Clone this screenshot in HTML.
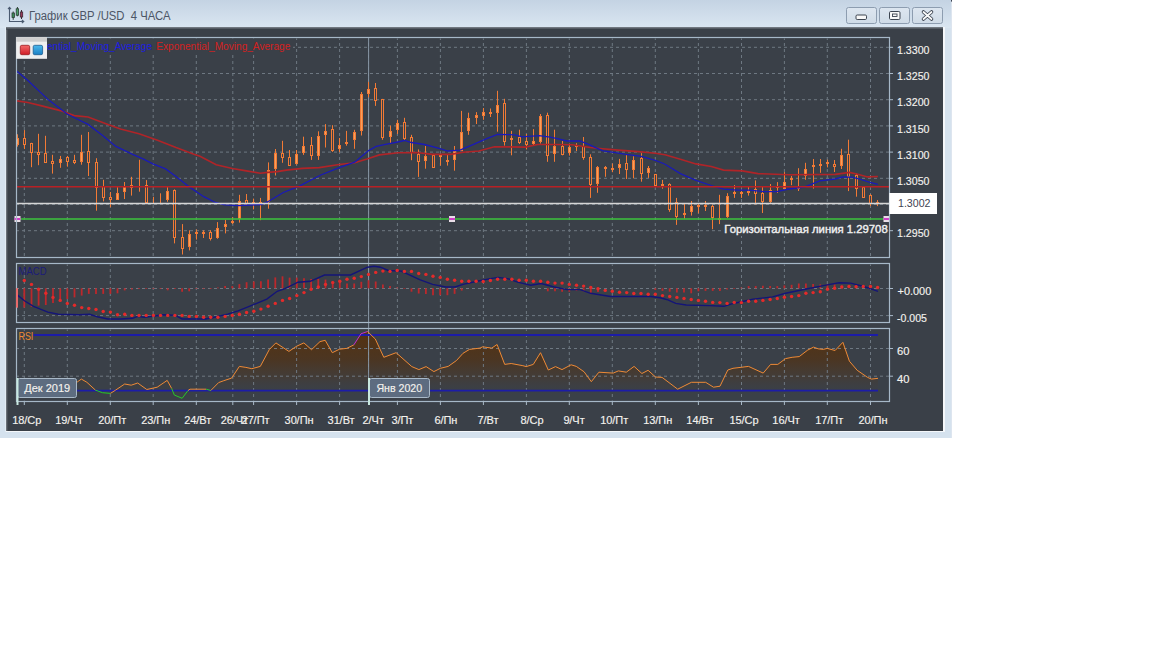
<!DOCTYPE html>
<html><head><meta charset="utf-8"><style>
html,body{margin:0;padding:0;background:#ffffff;width:1152px;height:648px;overflow:hidden}
svg{position:absolute;left:0;top:0;display:block}
</style></head><body>
<svg width="1152" height="648" viewBox="0 0 1152 648">
<defs><linearGradient id="tb" x1="0" y1="0" x2="0" y2="1"><stop offset="0" stop-color="#c4d3e3"/><stop offset="1" stop-color="#dae6f1"/></linearGradient><linearGradient id="btn" x1="0" y1="0" x2="0" y2="1"><stop offset="0" stop-color="#dde6f0"/><stop offset="1" stop-color="#cfdbe7"/></linearGradient><linearGradient id="shl" x1="0" y1="0" x2="1" y2="0"><stop offset="0" stop-color="#7a8088"/><stop offset="1" stop-color="#3a4048"/></linearGradient><linearGradient id="sh" x1="0" y1="0" x2="0" y2="1"><stop offset="0" stop-color="#7f868e"/><stop offset="1" stop-color="#3a4048"/></linearGradient><linearGradient id="rsif" x1="0" y1="330" x2="0" y2="396" gradientUnits="userSpaceOnUse"><stop offset="0" stop-color="#56320f" stop-opacity="1"/><stop offset="0.45" stop-color="#4c3520" stop-opacity="0.95"/><stop offset="0.72" stop-color="#483a2e" stop-opacity="0.6"/><stop offset="1" stop-color="#3c4048" stop-opacity="0"/></linearGradient><linearGradient id="gr" x1="0" y1="0" x2="0" y2="1"><stop offset="0" stop-color="#f46a6a"/><stop offset="1" stop-color="#d01c24"/></linearGradient><linearGradient id="gb" x1="0" y1="0" x2="0" y2="1"><stop offset="0" stop-color="#4cb8ec"/><stop offset="1" stop-color="#1a80c4"/></linearGradient><clipPath id="cmain"><rect x="17" y="38" width="872" height="219"/></clipPath><clipPath id="crsi"><rect x="17" y="329" width="872" height="72"/></clipPath></defs>
<rect x="0" y="0" width="952" height="438" fill="#d5e2ee"/>
<rect x="0" y="0" width="952" height="28" fill="url(#tb)"/>
<rect x="951" y="0" width="1" height="438" fill="#dde5ef"/><rect x="951" y="0" width="1" height="1.6" fill="#3a4250"/>
<rect x="6" y="27" width="939" height="405" fill="#f4f7fa"/><rect x="5" y="27" width="1" height="405" fill="#e2ecf4"/>
<rect x="6" y="27" width="937" height="404" fill="#3a4048"/><rect x="6" y="27" width="2" height="404" fill="url(#shl)"/>
<rect x="6" y="27" width="937" height="2.5" fill="url(#sh)"/>
<g fill="none" stroke="#4a5a70" stroke-width="1.1"><path d="M9.5 7.5 V21.5 H23.5"/><path d="M8 9.2 L9.5 7.3 L11 9.2"/><path d="M21.8 19.8 L23.8 21.5 L21.8 23.2"/></g>
<g stroke="#2c3c34" stroke-width="1"><path d="M13.2 11.5 V19.8"/><path d="M17.4 7 V16.3"/><path d="M21.5 10 V19" stroke="#3c2c34"/></g>
<rect x="12" y="13" width="2.4" height="4.5" fill="#3c8a58" stroke="#2c3c34" stroke-width="0.8"/>
<rect x="16.2" y="8.8" width="2.4" height="6.4" fill="#4aa068" stroke="#2c3c34" stroke-width="0.8"/>
<rect x="20.3" y="12" width="2.4" height="5" fill="#9a3a5a" stroke="#3c2c34" stroke-width="0.8"/>
<text x="29" y="20" font-family='"Liberation Sans", sans-serif' font-size="12.3" fill="#4c5666" textLength="141.5" lengthAdjust="spacingAndGlyphs" xml:space="preserve">График GBP /USD  4 ЧАСА</text>
<rect x="846.5" y="7.5" width="30" height="16" rx="2" fill="url(#btn)" stroke="#8d9db0" stroke-width="1"/>
<rect x="879.5" y="7.5" width="30" height="16" rx="2" fill="url(#btn)" stroke="#8d9db0" stroke-width="1"/>
<rect x="912.5" y="7.5" width="30" height="16" rx="2" fill="url(#btn)" stroke="#8d9db0" stroke-width="1"/>
<rect x="856" y="15" width="10.5" height="4.5" rx="1.2" fill="#f8f8f8" stroke="#3c4450" stroke-width="1"/>
<rect x="889.5" y="11.5" width="10.5" height="8" rx="1.2" fill="#f8f8f8" stroke="#3c4450" stroke-width="1"/><rect x="892.5" y="14" width="4.5" height="2.5" fill="#f8f8f8" stroke="#3c4450" stroke-width="0.9"/>
<path d="M923.5 12 L931.5 19 M931.5 12 L923.5 19" stroke="#3c4450" stroke-width="3.6" stroke-linecap="round"/><path d="M923.5 12 L931.5 19 M931.5 12 L923.5 19" stroke="#fafafa" stroke-width="1.8" stroke-linecap="round"/>
<g clip-path="url(#crsi)"><polygon points="17.0,386.0 77.2,382.0 81.4,379.1 86.9,382.3 95.4,390.1 102.5,392.7 110.4,393.4 115.6,390.1 124.7,384.0 131.2,385.2 137.7,383.0 146.8,389.5 157.2,387.2 167.2,380.4 171.7,388.5 174.3,395.0 182.1,398.3 188.0,390.5 190.0,389.2 206.2,389.2 210.8,390.5 218.6,382.6 223.8,380.7 231.6,378.1 239.4,366.4 245.9,367.4 251.8,368.7 260.3,366.4 269.4,349.4 275.9,342.9 288.9,351.4 296.7,346.2 303.9,342.9 311.5,349.7 320.0,341.6 325.2,340.3 332.3,352.7 339.5,349.2 346.7,348.4 353.8,344.9 361.0,333.8 367.5,331.5 375.3,339.0 383.8,357.3 396.1,352.7 411.8,366.6 418.9,369.6 426.1,366.6 433.9,371.6 440.4,368.3 448.2,366.4 456.5,360.5 463.0,353.3 469.5,349.4 480.0,348.1 482.6,346.8 491.7,348.1 497.1,344.5 504.7,364.4 511.2,363.5 522.9,365.7 526.2,366.6 533.3,364.4 540.5,352.7 548.3,370.0 555.5,366.6 562.0,369.6 571.1,364.8 576.3,366.4 584.1,371.8 591.3,381.7 598.9,372.2 613.2,373.1 618.4,370.9 626.3,372.2 634.1,366.4 641.9,373.5 648.1,370.3 655.5,377.0 662.1,377.4 677.7,389.2 691.4,382.3 705.7,382.3 713.5,387.2 720.0,386.2 727.8,370.0 733.0,368.3 748.5,366.4 763.2,373.1 770.6,364.4 777.8,364.4 785.6,358.6 792.1,357.3 799.2,356.6 807.7,350.1 813.6,347.1 818.1,348.8 823.3,349.4 827.2,348.4 835.1,350.5 842.9,342.3 849.4,361.2 857.2,370.3 867.6,377.4 871.5,379.1 878.0,378.3 878.0,401.0 17.0,401.0" fill="url(#rsif)"/></g>
<line x1="24.3" y1="38.5" x2="24.3" y2="256.5" stroke="#6e7882" stroke-width="1" stroke-dasharray="3 3" stroke-dashoffset="1.5"/>
<line x1="67.3" y1="38.5" x2="67.3" y2="256.5" stroke="#6e7882" stroke-width="1" stroke-dasharray="3 3" stroke-dashoffset="1.5"/>
<line x1="110.3" y1="38.5" x2="110.3" y2="256.5" stroke="#6e7882" stroke-width="1" stroke-dasharray="3 3" stroke-dashoffset="1.5"/>
<line x1="153.2" y1="38.5" x2="153.2" y2="256.5" stroke="#6e7882" stroke-width="1" stroke-dasharray="3 3" stroke-dashoffset="1.5"/>
<line x1="196.3" y1="38.5" x2="196.3" y2="256.5" stroke="#6e7882" stroke-width="1" stroke-dasharray="3 3" stroke-dashoffset="1.5"/>
<line x1="232.8" y1="38.5" x2="232.8" y2="256.5" stroke="#6e7882" stroke-width="1" stroke-dasharray="3 3" stroke-dashoffset="1.5"/>
<line x1="253.6" y1="38.5" x2="253.6" y2="256.5" stroke="#6e7882" stroke-width="1" stroke-dasharray="3 3" stroke-dashoffset="1.5"/>
<line x1="296.6" y1="38.5" x2="296.6" y2="256.5" stroke="#6e7882" stroke-width="1" stroke-dasharray="3 3" stroke-dashoffset="1.5"/>
<line x1="339.6" y1="38.5" x2="339.6" y2="256.5" stroke="#6e7882" stroke-width="1" stroke-dasharray="3 3" stroke-dashoffset="1.5"/>
<line x1="368.5" y1="38.5" x2="368.5" y2="256.5" stroke="#6e7882" stroke-width="1" stroke-dasharray="3 3" stroke-dashoffset="1.5"/>
<line x1="397.4" y1="38.5" x2="397.4" y2="256.5" stroke="#6e7882" stroke-width="1" stroke-dasharray="3 3" stroke-dashoffset="1.5"/>
<line x1="440.4" y1="38.5" x2="440.4" y2="256.5" stroke="#6e7882" stroke-width="1" stroke-dasharray="3 3" stroke-dashoffset="1.5"/>
<line x1="483.4" y1="38.5" x2="483.4" y2="256.5" stroke="#6e7882" stroke-width="1" stroke-dasharray="3 3" stroke-dashoffset="1.5"/>
<line x1="526.4" y1="38.5" x2="526.4" y2="256.5" stroke="#6e7882" stroke-width="1" stroke-dasharray="3 3" stroke-dashoffset="1.5"/>
<line x1="569.3" y1="38.5" x2="569.3" y2="256.5" stroke="#6e7882" stroke-width="1" stroke-dasharray="3 3" stroke-dashoffset="1.5"/>
<line x1="612.3" y1="38.5" x2="612.3" y2="256.5" stroke="#6e7882" stroke-width="1" stroke-dasharray="3 3" stroke-dashoffset="1.5"/>
<line x1="655.3" y1="38.5" x2="655.3" y2="256.5" stroke="#6e7882" stroke-width="1" stroke-dasharray="3 3" stroke-dashoffset="1.5"/>
<line x1="698.4" y1="38.5" x2="698.4" y2="256.5" stroke="#6e7882" stroke-width="1" stroke-dasharray="3 3" stroke-dashoffset="1.5"/>
<line x1="741.5" y1="38.5" x2="741.5" y2="256.5" stroke="#6e7882" stroke-width="1" stroke-dasharray="3 3" stroke-dashoffset="1.5"/>
<line x1="784.4" y1="38.5" x2="784.4" y2="256.5" stroke="#6e7882" stroke-width="1" stroke-dasharray="3 3" stroke-dashoffset="1.5"/>
<line x1="827.3" y1="38.5" x2="827.3" y2="256.5" stroke="#6e7882" stroke-width="1" stroke-dasharray="3 3" stroke-dashoffset="1.5"/>
<line x1="870.5" y1="38.5" x2="870.5" y2="256.5" stroke="#6e7882" stroke-width="1" stroke-dasharray="3 3" stroke-dashoffset="1.5"/>
<line x1="24.3" y1="264.5" x2="24.3" y2="321.5" stroke="#6e7882" stroke-width="1" stroke-dasharray="3 3" stroke-dashoffset="1.5"/>
<line x1="67.3" y1="264.5" x2="67.3" y2="321.5" stroke="#6e7882" stroke-width="1" stroke-dasharray="3 3" stroke-dashoffset="1.5"/>
<line x1="110.3" y1="264.5" x2="110.3" y2="321.5" stroke="#6e7882" stroke-width="1" stroke-dasharray="3 3" stroke-dashoffset="1.5"/>
<line x1="153.2" y1="264.5" x2="153.2" y2="321.5" stroke="#6e7882" stroke-width="1" stroke-dasharray="3 3" stroke-dashoffset="1.5"/>
<line x1="196.3" y1="264.5" x2="196.3" y2="321.5" stroke="#6e7882" stroke-width="1" stroke-dasharray="3 3" stroke-dashoffset="1.5"/>
<line x1="232.8" y1="264.5" x2="232.8" y2="321.5" stroke="#6e7882" stroke-width="1" stroke-dasharray="3 3" stroke-dashoffset="1.5"/>
<line x1="253.6" y1="264.5" x2="253.6" y2="321.5" stroke="#6e7882" stroke-width="1" stroke-dasharray="3 3" stroke-dashoffset="1.5"/>
<line x1="296.6" y1="264.5" x2="296.6" y2="321.5" stroke="#6e7882" stroke-width="1" stroke-dasharray="3 3" stroke-dashoffset="1.5"/>
<line x1="339.6" y1="264.5" x2="339.6" y2="321.5" stroke="#6e7882" stroke-width="1" stroke-dasharray="3 3" stroke-dashoffset="1.5"/>
<line x1="368.5" y1="264.5" x2="368.5" y2="321.5" stroke="#6e7882" stroke-width="1" stroke-dasharray="3 3" stroke-dashoffset="1.5"/>
<line x1="397.4" y1="264.5" x2="397.4" y2="321.5" stroke="#6e7882" stroke-width="1" stroke-dasharray="3 3" stroke-dashoffset="1.5"/>
<line x1="440.4" y1="264.5" x2="440.4" y2="321.5" stroke="#6e7882" stroke-width="1" stroke-dasharray="3 3" stroke-dashoffset="1.5"/>
<line x1="483.4" y1="264.5" x2="483.4" y2="321.5" stroke="#6e7882" stroke-width="1" stroke-dasharray="3 3" stroke-dashoffset="1.5"/>
<line x1="526.4" y1="264.5" x2="526.4" y2="321.5" stroke="#6e7882" stroke-width="1" stroke-dasharray="3 3" stroke-dashoffset="1.5"/>
<line x1="569.3" y1="264.5" x2="569.3" y2="321.5" stroke="#6e7882" stroke-width="1" stroke-dasharray="3 3" stroke-dashoffset="1.5"/>
<line x1="612.3" y1="264.5" x2="612.3" y2="321.5" stroke="#6e7882" stroke-width="1" stroke-dasharray="3 3" stroke-dashoffset="1.5"/>
<line x1="655.3" y1="264.5" x2="655.3" y2="321.5" stroke="#6e7882" stroke-width="1" stroke-dasharray="3 3" stroke-dashoffset="1.5"/>
<line x1="698.4" y1="264.5" x2="698.4" y2="321.5" stroke="#6e7882" stroke-width="1" stroke-dasharray="3 3" stroke-dashoffset="1.5"/>
<line x1="741.5" y1="264.5" x2="741.5" y2="321.5" stroke="#6e7882" stroke-width="1" stroke-dasharray="3 3" stroke-dashoffset="1.5"/>
<line x1="784.4" y1="264.5" x2="784.4" y2="321.5" stroke="#6e7882" stroke-width="1" stroke-dasharray="3 3" stroke-dashoffset="1.5"/>
<line x1="827.3" y1="264.5" x2="827.3" y2="321.5" stroke="#6e7882" stroke-width="1" stroke-dasharray="3 3" stroke-dashoffset="1.5"/>
<line x1="870.5" y1="264.5" x2="870.5" y2="321.5" stroke="#6e7882" stroke-width="1" stroke-dasharray="3 3" stroke-dashoffset="1.5"/>
<line x1="24.3" y1="329.5" x2="24.3" y2="400.5" stroke="#6e7882" stroke-width="1" stroke-dasharray="3 3" stroke-dashoffset="1.5"/>
<line x1="67.3" y1="329.5" x2="67.3" y2="400.5" stroke="#6e7882" stroke-width="1" stroke-dasharray="3 3" stroke-dashoffset="1.5"/>
<line x1="110.3" y1="329.5" x2="110.3" y2="400.5" stroke="#6e7882" stroke-width="1" stroke-dasharray="3 3" stroke-dashoffset="1.5"/>
<line x1="153.2" y1="329.5" x2="153.2" y2="400.5" stroke="#6e7882" stroke-width="1" stroke-dasharray="3 3" stroke-dashoffset="1.5"/>
<line x1="196.3" y1="329.5" x2="196.3" y2="400.5" stroke="#6e7882" stroke-width="1" stroke-dasharray="3 3" stroke-dashoffset="1.5"/>
<line x1="232.8" y1="329.5" x2="232.8" y2="400.5" stroke="#6e7882" stroke-width="1" stroke-dasharray="3 3" stroke-dashoffset="1.5"/>
<line x1="253.6" y1="329.5" x2="253.6" y2="400.5" stroke="#6e7882" stroke-width="1" stroke-dasharray="3 3" stroke-dashoffset="1.5"/>
<line x1="296.6" y1="329.5" x2="296.6" y2="400.5" stroke="#6e7882" stroke-width="1" stroke-dasharray="3 3" stroke-dashoffset="1.5"/>
<line x1="339.6" y1="329.5" x2="339.6" y2="400.5" stroke="#6e7882" stroke-width="1" stroke-dasharray="3 3" stroke-dashoffset="1.5"/>
<line x1="368.5" y1="329.5" x2="368.5" y2="400.5" stroke="#6e7882" stroke-width="1" stroke-dasharray="3 3" stroke-dashoffset="1.5"/>
<line x1="397.4" y1="329.5" x2="397.4" y2="400.5" stroke="#6e7882" stroke-width="1" stroke-dasharray="3 3" stroke-dashoffset="1.5"/>
<line x1="440.4" y1="329.5" x2="440.4" y2="400.5" stroke="#6e7882" stroke-width="1" stroke-dasharray="3 3" stroke-dashoffset="1.5"/>
<line x1="483.4" y1="329.5" x2="483.4" y2="400.5" stroke="#6e7882" stroke-width="1" stroke-dasharray="3 3" stroke-dashoffset="1.5"/>
<line x1="526.4" y1="329.5" x2="526.4" y2="400.5" stroke="#6e7882" stroke-width="1" stroke-dasharray="3 3" stroke-dashoffset="1.5"/>
<line x1="569.3" y1="329.5" x2="569.3" y2="400.5" stroke="#6e7882" stroke-width="1" stroke-dasharray="3 3" stroke-dashoffset="1.5"/>
<line x1="612.3" y1="329.5" x2="612.3" y2="400.5" stroke="#6e7882" stroke-width="1" stroke-dasharray="3 3" stroke-dashoffset="1.5"/>
<line x1="655.3" y1="329.5" x2="655.3" y2="400.5" stroke="#6e7882" stroke-width="1" stroke-dasharray="3 3" stroke-dashoffset="1.5"/>
<line x1="698.4" y1="329.5" x2="698.4" y2="400.5" stroke="#6e7882" stroke-width="1" stroke-dasharray="3 3" stroke-dashoffset="1.5"/>
<line x1="741.5" y1="329.5" x2="741.5" y2="400.5" stroke="#6e7882" stroke-width="1" stroke-dasharray="3 3" stroke-dashoffset="1.5"/>
<line x1="784.4" y1="329.5" x2="784.4" y2="400.5" stroke="#6e7882" stroke-width="1" stroke-dasharray="3 3" stroke-dashoffset="1.5"/>
<line x1="827.3" y1="329.5" x2="827.3" y2="400.5" stroke="#6e7882" stroke-width="1" stroke-dasharray="3 3" stroke-dashoffset="1.5"/>
<line x1="870.5" y1="329.5" x2="870.5" y2="400.5" stroke="#6e7882" stroke-width="1" stroke-dasharray="3 3" stroke-dashoffset="1.5"/>
<line x1="17" y1="47.3" x2="889.5" y2="47.3" stroke="#6e7882" stroke-width="1" stroke-dasharray="3 3" stroke-dashoffset="1"/>
<line x1="17" y1="73.5" x2="889.5" y2="73.5" stroke="#6e7882" stroke-width="1" stroke-dasharray="3 3" stroke-dashoffset="1"/>
<line x1="17" y1="99.7" x2="889.5" y2="99.7" stroke="#6e7882" stroke-width="1" stroke-dasharray="3 3" stroke-dashoffset="1"/>
<line x1="17" y1="125.9" x2="889.5" y2="125.9" stroke="#6e7882" stroke-width="1" stroke-dasharray="3 3" stroke-dashoffset="1"/>
<line x1="17" y1="152.1" x2="889.5" y2="152.1" stroke="#6e7882" stroke-width="1" stroke-dasharray="3 3" stroke-dashoffset="1"/>
<line x1="17" y1="178.3" x2="889.5" y2="178.3" stroke="#6e7882" stroke-width="1" stroke-dasharray="3 3" stroke-dashoffset="1"/>
<line x1="17" y1="204.5" x2="889.5" y2="204.5" stroke="#6e7882" stroke-width="1" stroke-dasharray="3 3" stroke-dashoffset="1"/>
<line x1="17" y1="230.7" x2="889.5" y2="230.7" stroke="#6e7882" stroke-width="1" stroke-dasharray="3 3" stroke-dashoffset="1"/>
<line x1="17" y1="288.5" x2="889.5" y2="288.5" stroke="#6e7882" stroke-width="1" stroke-dasharray="3 3" stroke-dashoffset="1"/>
<line x1="17" y1="315.6" x2="889.5" y2="315.6" stroke="#6e7882" stroke-width="1" stroke-dasharray="3 3" stroke-dashoffset="1"/>
<line x1="17" y1="348.5" x2="889.5" y2="348.5" stroke="#6e7882" stroke-width="1" stroke-dasharray="3 3" stroke-dashoffset="1"/>
<line x1="17" y1="376.2" x2="889.5" y2="376.2" stroke="#6e7882" stroke-width="1" stroke-dasharray="3 3" stroke-dashoffset="1"/>
<line x1="368.6" y1="38" x2="368.6" y2="401" stroke="#8796a4" stroke-width="1"/>
<g clip-path="url(#cmain)">
<line x1="17.5" y1="134.3" x2="17.5" y2="146.6" stroke="#f27a35" stroke-width="1"/>
<rect x="16.5" y="138.5" width="2" height="6.0" fill="#f8a05c" stroke="#f27a35" stroke-width="1"/>
<line x1="24.5" y1="130.1" x2="24.5" y2="149.0" stroke="#f27a35" stroke-width="1"/>
<rect x="23.5" y="138.5" width="2" height="6.0" fill="#3a4048" stroke="#f27a35" stroke-width="1"/>
<line x1="31.5" y1="142.8" x2="31.5" y2="167.2" stroke="#f27a35" stroke-width="1"/>
<rect x="30.5" y="143.5" width="2" height="9.0" fill="#3a4048" stroke="#f27a35" stroke-width="1"/>
<line x1="38.5" y1="133.8" x2="38.5" y2="165.2" stroke="#f27a35" stroke-width="1"/>
<rect x="37.5" y="152.5" width="2" height="2.0" fill="#3a4048" stroke="#f27a35" stroke-width="1"/>
<line x1="45.5" y1="135.8" x2="45.5" y2="162.0" stroke="#f27a35" stroke-width="1"/>
<rect x="44.5" y="153.5" width="2" height="9.0" fill="#3a4048" stroke="#f27a35" stroke-width="1"/>
<line x1="52.5" y1="154.8" x2="52.5" y2="173.6" stroke="#f27a35" stroke-width="1"/>
<rect x="51.5" y="161.5" width="2" height="2.0" fill="#3a4048" stroke="#f27a35" stroke-width="1"/>
<line x1="60.5" y1="155.9" x2="60.5" y2="167.8" stroke="#f27a35" stroke-width="1"/>
<rect x="59.5" y="159.5" width="2" height="3.0" fill="#f8a05c" stroke="#f27a35" stroke-width="1"/>
<line x1="67.5" y1="155.9" x2="67.5" y2="166.7" stroke="#f27a35" stroke-width="1"/>
<rect x="66.5" y="157.5" width="2" height="4.0" fill="#3a4048" stroke="#f27a35" stroke-width="1"/>
<line x1="74.5" y1="154.8" x2="74.5" y2="164.1" stroke="#f27a35" stroke-width="1"/>
<rect x="73.5" y="160.5" width="2" height="2.0" fill="#3a4048" stroke="#f27a35" stroke-width="1"/>
<line x1="81.5" y1="134.8" x2="81.5" y2="164.7" stroke="#f27a35" stroke-width="1"/>
<rect x="80.5" y="152.5" width="2" height="9.0" fill="#f8a05c" stroke="#f27a35" stroke-width="1"/>
<line x1="88.5" y1="132.0" x2="88.5" y2="176.0" stroke="#f27a35" stroke-width="1"/>
<rect x="87.5" y="151.5" width="2" height="11.0" fill="#3a4048" stroke="#f27a35" stroke-width="1"/>
<line x1="96.5" y1="158.2" x2="96.5" y2="210.7" stroke="#f27a35" stroke-width="1"/>
<rect x="95.5" y="162.5" width="2" height="25.0" fill="#3a4048" stroke="#f27a35" stroke-width="1"/>
<line x1="103.5" y1="179.8" x2="103.5" y2="201.4" stroke="#f27a35" stroke-width="1"/>
<rect x="102.5" y="186.5" width="2" height="11.0" fill="#3a4048" stroke="#f27a35" stroke-width="1"/>
<line x1="110.5" y1="192.0" x2="110.5" y2="207.2" stroke="#f27a35" stroke-width="1"/>
<rect x="109.5" y="197.5" width="2" height="2.0" fill="#3a4048" stroke="#f27a35" stroke-width="1"/>
<line x1="117.5" y1="187.1" x2="117.5" y2="199.9" stroke="#f27a35" stroke-width="1"/>
<rect x="116.5" y="193.5" width="2" height="6.0" fill="#f8a05c" stroke="#f27a35" stroke-width="1"/>
<line x1="124.5" y1="182.0" x2="124.5" y2="199.0" stroke="#f27a35" stroke-width="1"/>
<rect x="123.5" y="187.5" width="2" height="4.0" fill="#f8a05c" stroke="#f27a35" stroke-width="1"/>
<line x1="131.5" y1="176.8" x2="131.5" y2="195.6" stroke="#f27a35" stroke-width="1"/>
<rect x="130.5" y="185.5" width="2" height="2.0" fill="#f8a05c" stroke="#f27a35" stroke-width="1"/>
<line x1="139.5" y1="159.8" x2="139.5" y2="191.7" stroke="#f27a35" stroke-width="1"/>
<line x1="146.5" y1="180.1" x2="146.5" y2="203.0" stroke="#f27a35" stroke-width="1"/>
<rect x="145.5" y="185.5" width="2" height="17.0" fill="#3a4048" stroke="#f27a35" stroke-width="1"/>
<line x1="153.5" y1="196.8" x2="153.5" y2="203.0" stroke="#f27a35" stroke-width="1"/>
<line x1="160.5" y1="193.3" x2="160.5" y2="203.0" stroke="#f27a35" stroke-width="1"/>
<line x1="167.5" y1="187.1" x2="167.5" y2="201.8" stroke="#f27a35" stroke-width="1"/>
<rect x="166.5" y="191.5" width="2" height="8.0" fill="#f8a05c" stroke="#f27a35" stroke-width="1"/>
<line x1="174.5" y1="189.4" x2="174.5" y2="243.4" stroke="#f27a35" stroke-width="1"/>
<rect x="173.5" y="190.5" width="2" height="47.0" fill="#3a4048" stroke="#f27a35" stroke-width="1"/>
<line x1="182.5" y1="224.1" x2="182.5" y2="254.5" stroke="#f27a35" stroke-width="1"/>
<rect x="181.5" y="237.5" width="2" height="11.0" fill="#3a4048" stroke="#f27a35" stroke-width="1"/>
<line x1="189.5" y1="230.3" x2="189.5" y2="250.4" stroke="#f27a35" stroke-width="1"/>
<rect x="188.5" y="234.5" width="2" height="12.0" fill="#f8a05c" stroke="#f27a35" stroke-width="1"/>
<line x1="196.5" y1="229.5" x2="196.5" y2="239.6" stroke="#f27a35" stroke-width="1"/>
<rect x="195.5" y="232.5" width="2" height="1.0" fill="#f8a05c" stroke="#f27a35" stroke-width="1"/>
<line x1="203.5" y1="230.3" x2="203.5" y2="238.0" stroke="#f27a35" stroke-width="1"/>
<rect x="202.5" y="232.5" width="2" height="1.0" fill="#f8a05c" stroke="#f27a35" stroke-width="1"/>
<line x1="210.5" y1="230.3" x2="210.5" y2="240.5" stroke="#f27a35" stroke-width="1"/>
<rect x="209.5" y="232.5" width="2" height="6.0" fill="#3a4048" stroke="#f27a35" stroke-width="1"/>
<line x1="217.5" y1="222.1" x2="217.5" y2="238.8" stroke="#f27a35" stroke-width="1"/>
<rect x="216.5" y="228.5" width="2" height="9.0" fill="#f8a05c" stroke="#f27a35" stroke-width="1"/>
<line x1="225.5" y1="219.9" x2="225.5" y2="233.4" stroke="#f27a35" stroke-width="1"/>
<rect x="224.5" y="224.5" width="2" height="2.0" fill="#f8a05c" stroke="#f27a35" stroke-width="1"/>
<line x1="232.5" y1="217.2" x2="232.5" y2="224.1" stroke="#f27a35" stroke-width="1"/>
<rect x="231.5" y="221.5" width="2" height="1.0" fill="#f8a05c" stroke="#f27a35" stroke-width="1"/>
<line x1="239.5" y1="194.8" x2="239.5" y2="222.6" stroke="#f27a35" stroke-width="1"/>
<rect x="238.5" y="201.5" width="2" height="17.0" fill="#f8a05c" stroke="#f27a35" stroke-width="1"/>
<line x1="246.5" y1="194.0" x2="246.5" y2="204.8" stroke="#f27a35" stroke-width="1"/>
<rect x="245.5" y="200.5" width="2" height="3.0" fill="#3a4048" stroke="#f27a35" stroke-width="1"/>
<line x1="253.5" y1="198.6" x2="253.5" y2="209.4" stroke="#f27a35" stroke-width="1"/>
<rect x="252.5" y="202.5" width="2" height="2.0" fill="#3a4048" stroke="#f27a35" stroke-width="1"/>
<line x1="260.5" y1="197.9" x2="260.5" y2="220.2" stroke="#f27a35" stroke-width="1"/>
<rect x="259.5" y="202.5" width="2" height="2.0" fill="#f8a05c" stroke="#f27a35" stroke-width="1"/>
<line x1="268.5" y1="162.4" x2="268.5" y2="208.7" stroke="#f27a35" stroke-width="1"/>
<rect x="267.5" y="170.5" width="2" height="31.0" fill="#f8a05c" stroke="#f27a35" stroke-width="1"/>
<line x1="275.5" y1="149.0" x2="275.5" y2="175.5" stroke="#f27a35" stroke-width="1"/>
<rect x="274.5" y="153.5" width="2" height="15.0" fill="#f8a05c" stroke="#f27a35" stroke-width="1"/>
<line x1="282.5" y1="140.8" x2="282.5" y2="162.8" stroke="#f27a35" stroke-width="1"/>
<rect x="281.5" y="153.5" width="2" height="4.0" fill="#3a4048" stroke="#f27a35" stroke-width="1"/>
<line x1="289.5" y1="150.0" x2="289.5" y2="165.5" stroke="#f27a35" stroke-width="1"/>
<rect x="288.5" y="157.5" width="2" height="8.0" fill="#3a4048" stroke="#f27a35" stroke-width="1"/>
<line x1="296.5" y1="150.0" x2="296.5" y2="164.5" stroke="#f27a35" stroke-width="1"/>
<rect x="295.5" y="154.5" width="2" height="9.0" fill="#f8a05c" stroke="#f27a35" stroke-width="1"/>
<line x1="303.5" y1="136.7" x2="303.5" y2="154.9" stroke="#f27a35" stroke-width="1"/>
<rect x="302.5" y="146.5" width="2" height="6.0" fill="#f8a05c" stroke="#f27a35" stroke-width="1"/>
<line x1="311.5" y1="137.0" x2="311.5" y2="159.9" stroke="#f27a35" stroke-width="1"/>
<rect x="310.5" y="145.5" width="2" height="10.0" fill="#3a4048" stroke="#f27a35" stroke-width="1"/>
<line x1="318.5" y1="131.3" x2="318.5" y2="159.9" stroke="#f27a35" stroke-width="1"/>
<rect x="317.5" y="136.5" width="2" height="19.0" fill="#f8a05c" stroke="#f27a35" stroke-width="1"/>
<line x1="325.5" y1="124.1" x2="325.5" y2="147.5" stroke="#f27a35" stroke-width="1"/>
<rect x="324.5" y="131.5" width="2" height="3.0" fill="#f8a05c" stroke="#f27a35" stroke-width="1"/>
<line x1="332.5" y1="125.2" x2="332.5" y2="151.9" stroke="#f27a35" stroke-width="1"/>
<rect x="331.5" y="129.5" width="2" height="21.0" fill="#3a4048" stroke="#f27a35" stroke-width="1"/>
<line x1="339.5" y1="138.0" x2="339.5" y2="152.2" stroke="#f27a35" stroke-width="1"/>
<rect x="338.5" y="145.5" width="2" height="3.0" fill="#f8a05c" stroke="#f27a35" stroke-width="1"/>
<line x1="346.5" y1="130.9" x2="346.5" y2="145.7" stroke="#f27a35" stroke-width="1"/>
<rect x="345.5" y="142.5" width="2" height="1.0" fill="#f8a05c" stroke="#f27a35" stroke-width="1"/>
<line x1="354.5" y1="129.8" x2="354.5" y2="148.8" stroke="#f27a35" stroke-width="1"/>
<rect x="353.5" y="132.5" width="2" height="7.0" fill="#f8a05c" stroke="#f27a35" stroke-width="1"/>
<line x1="361.5" y1="92.0" x2="361.5" y2="135.5" stroke="#f27a35" stroke-width="1"/>
<rect x="360.5" y="94.5" width="2" height="36.0" fill="#f8a05c" stroke="#f27a35" stroke-width="1"/>
<line x1="368.5" y1="81.9" x2="368.5" y2="97.4" stroke="#f27a35" stroke-width="1"/>
<rect x="367.5" y="89.5" width="2" height="4.0" fill="#f8a05c" stroke="#f27a35" stroke-width="1"/>
<line x1="375.5" y1="83.0" x2="375.5" y2="105.9" stroke="#f27a35" stroke-width="1"/>
<rect x="374.5" y="88.5" width="2" height="12.0" fill="#3a4048" stroke="#f27a35" stroke-width="1"/>
<line x1="382.5" y1="98.9" x2="382.5" y2="139.8" stroke="#f27a35" stroke-width="1"/>
<rect x="381.5" y="99.5" width="2" height="38.0" fill="#3a4048" stroke="#f27a35" stroke-width="1"/>
<line x1="390.5" y1="125.6" x2="390.5" y2="143.5" stroke="#f27a35" stroke-width="1"/>
<rect x="389.5" y="131.5" width="2" height="5.0" fill="#f8a05c" stroke="#f27a35" stroke-width="1"/>
<line x1="397.5" y1="119.8" x2="397.5" y2="134.0" stroke="#f27a35" stroke-width="1"/>
<rect x="396.5" y="123.5" width="2" height="6.0" fill="#f8a05c" stroke="#f27a35" stroke-width="1"/>
<line x1="404.5" y1="117.8" x2="404.5" y2="141.0" stroke="#f27a35" stroke-width="1"/>
<rect x="403.5" y="122.5" width="2" height="16.0" fill="#3a4048" stroke="#f27a35" stroke-width="1"/>
<line x1="411.5" y1="134.8" x2="411.5" y2="160.2" stroke="#f27a35" stroke-width="1"/>
<rect x="410.5" y="137.5" width="2" height="15.0" fill="#3a4048" stroke="#f27a35" stroke-width="1"/>
<line x1="418.5" y1="149.4" x2="418.5" y2="176.9" stroke="#f27a35" stroke-width="1"/>
<rect x="417.5" y="154.5" width="2" height="7.0" fill="#3a4048" stroke="#f27a35" stroke-width="1"/>
<line x1="425.5" y1="146.0" x2="425.5" y2="168.7" stroke="#f27a35" stroke-width="1"/>
<rect x="424.5" y="156.5" width="2" height="4.0" fill="#f8a05c" stroke="#f27a35" stroke-width="1"/>
<line x1="433.5" y1="153.8" x2="433.5" y2="167.7" stroke="#f27a35" stroke-width="1"/>
<rect x="432.5" y="155.5" width="2" height="12.0" fill="#3a4048" stroke="#f27a35" stroke-width="1"/>
<line x1="440.5" y1="154.1" x2="440.5" y2="165.6" stroke="#f27a35" stroke-width="1"/>
<rect x="439.5" y="155.5" width="2" height="1.0" fill="#f8a05c" stroke="#f27a35" stroke-width="1"/>
<line x1="447.5" y1="154.4" x2="447.5" y2="165.6" stroke="#f27a35" stroke-width="1"/>
<rect x="446.5" y="160.5" width="2" height="1.0" fill="#f8a05c" stroke="#f27a35" stroke-width="1"/>
<line x1="454.5" y1="146.0" x2="454.5" y2="170.7" stroke="#f27a35" stroke-width="1"/>
<rect x="453.5" y="151.5" width="2" height="8.0" fill="#f8a05c" stroke="#f27a35" stroke-width="1"/>
<line x1="461.5" y1="110.9" x2="461.5" y2="150.2" stroke="#f27a35" stroke-width="1"/>
<rect x="460.5" y="132.5" width="2" height="18.0" fill="#f8a05c" stroke="#f27a35" stroke-width="1"/>
<line x1="468.5" y1="112.7" x2="468.5" y2="134.8" stroke="#f27a35" stroke-width="1"/>
<rect x="467.5" y="118.5" width="2" height="12.0" fill="#f8a05c" stroke="#f27a35" stroke-width="1"/>
<line x1="476.5" y1="112.1" x2="476.5" y2="124.0" stroke="#f27a35" stroke-width="1"/>
<rect x="475.5" y="115.5" width="2" height="2.0" fill="#f8a05c" stroke="#f27a35" stroke-width="1"/>
<line x1="483.5" y1="108.0" x2="483.5" y2="119.8" stroke="#f27a35" stroke-width="1"/>
<rect x="482.5" y="112.5" width="2" height="3.0" fill="#f8a05c" stroke="#f27a35" stroke-width="1"/>
<line x1="490.5" y1="108.5" x2="490.5" y2="117.0" stroke="#f27a35" stroke-width="1"/>
<rect x="489.5" y="112.5" width="2" height="1.0" fill="#f8a05c" stroke="#f27a35" stroke-width="1"/>
<line x1="497.5" y1="90.8" x2="497.5" y2="131.7" stroke="#f27a35" stroke-width="1"/>
<rect x="496.5" y="105.5" width="2" height="7.0" fill="#f8a05c" stroke="#f27a35" stroke-width="1"/>
<line x1="504.5" y1="98.8" x2="504.5" y2="145.6" stroke="#f27a35" stroke-width="1"/>
<rect x="503.5" y="103.5" width="2" height="38.0" fill="#3a4048" stroke="#f27a35" stroke-width="1"/>
<line x1="511.5" y1="130.9" x2="511.5" y2="155.3" stroke="#f27a35" stroke-width="1"/>
<rect x="510.5" y="138.5" width="2" height="1.0" fill="#f8a05c" stroke="#f27a35" stroke-width="1"/>
<line x1="519.5" y1="129.7" x2="519.5" y2="144.0" stroke="#f27a35" stroke-width="1"/>
<rect x="518.5" y="137.5" width="2" height="5.0" fill="#3a4048" stroke="#f27a35" stroke-width="1"/>
<line x1="526.5" y1="134.0" x2="526.5" y2="149.4" stroke="#f27a35" stroke-width="1"/>
<rect x="525.5" y="141.5" width="2" height="3.0" fill="#3a4048" stroke="#f27a35" stroke-width="1"/>
<line x1="533.5" y1="129.1" x2="533.5" y2="145.6" stroke="#f27a35" stroke-width="1"/>
<rect x="532.5" y="141.5" width="2" height="2.0" fill="#f8a05c" stroke="#f27a35" stroke-width="1"/>
<line x1="540.5" y1="114.0" x2="540.5" y2="143.6" stroke="#f27a35" stroke-width="1"/>
<rect x="539.5" y="116.5" width="2" height="25.0" fill="#f8a05c" stroke="#f27a35" stroke-width="1"/>
<line x1="547.5" y1="112.7" x2="547.5" y2="161.8" stroke="#f27a35" stroke-width="1"/>
<rect x="546.5" y="115.5" width="2" height="40.0" fill="#3a4048" stroke="#f27a35" stroke-width="1"/>
<line x1="554.5" y1="129.7" x2="554.5" y2="161.8" stroke="#f27a35" stroke-width="1"/>
<rect x="553.5" y="146.5" width="2" height="7.0" fill="#f8a05c" stroke="#f27a35" stroke-width="1"/>
<line x1="562.5" y1="141.0" x2="562.5" y2="155.3" stroke="#f27a35" stroke-width="1"/>
<rect x="561.5" y="146.5" width="2" height="8.0" fill="#3a4048" stroke="#f27a35" stroke-width="1"/>
<line x1="569.5" y1="143.6" x2="569.5" y2="155.6" stroke="#f27a35" stroke-width="1"/>
<rect x="568.5" y="147.5" width="2" height="5.0" fill="#f8a05c" stroke="#f27a35" stroke-width="1"/>
<line x1="576.5" y1="143.2" x2="576.5" y2="151.0" stroke="#f27a35" stroke-width="1"/>
<rect x="575.5" y="145.5" width="2" height="1.0" fill="#f8a05c" stroke="#f27a35" stroke-width="1"/>
<line x1="583.5" y1="137.0" x2="583.5" y2="159.8" stroke="#f27a35" stroke-width="1"/>
<rect x="582.5" y="146.5" width="2" height="11.0" fill="#3a4048" stroke="#f27a35" stroke-width="1"/>
<line x1="590.5" y1="154.3" x2="590.5" y2="197.9" stroke="#f27a35" stroke-width="1"/>
<rect x="589.5" y="157.5" width="2" height="27.0" fill="#3a4048" stroke="#f27a35" stroke-width="1"/>
<line x1="597.5" y1="166.0" x2="597.5" y2="192.8" stroke="#f27a35" stroke-width="1"/>
<rect x="596.5" y="167.5" width="2" height="16.0" fill="#f8a05c" stroke="#f27a35" stroke-width="1"/>
<line x1="605.5" y1="166.0" x2="605.5" y2="176.8" stroke="#f27a35" stroke-width="1"/>
<rect x="604.5" y="167.5" width="2" height="1.0" fill="#f8a05c" stroke="#f27a35" stroke-width="1"/>
<line x1="612.5" y1="163.5" x2="612.5" y2="172.2" stroke="#f27a35" stroke-width="1"/>
<rect x="611.5" y="168.5" width="2" height="1.0" fill="#f8a05c" stroke="#f27a35" stroke-width="1"/>
<line x1="619.5" y1="158.9" x2="619.5" y2="174.0" stroke="#f27a35" stroke-width="1"/>
<rect x="618.5" y="164.5" width="2" height="3.0" fill="#f8a05c" stroke="#f27a35" stroke-width="1"/>
<line x1="626.5" y1="155.2" x2="626.5" y2="179.0" stroke="#f27a35" stroke-width="1"/>
<rect x="625.5" y="163.5" width="2" height="6.0" fill="#3a4048" stroke="#f27a35" stroke-width="1"/>
<line x1="633.5" y1="156.3" x2="633.5" y2="178.3" stroke="#f27a35" stroke-width="1"/>
<rect x="632.5" y="160.5" width="2" height="9.0" fill="#f8a05c" stroke="#f27a35" stroke-width="1"/>
<line x1="641.5" y1="153.2" x2="641.5" y2="181.7" stroke="#f27a35" stroke-width="1"/>
<rect x="640.5" y="158.5" width="2" height="15.0" fill="#3a4048" stroke="#f27a35" stroke-width="1"/>
<line x1="648.5" y1="166.0" x2="648.5" y2="177.9" stroke="#f27a35" stroke-width="1"/>
<rect x="647.5" y="168.5" width="2" height="4.0" fill="#f8a05c" stroke="#f27a35" stroke-width="1"/>
<line x1="655.5" y1="174.0" x2="655.5" y2="186.4" stroke="#f27a35" stroke-width="1"/>
<rect x="654.5" y="174.5" width="2" height="11.0" fill="#3a4048" stroke="#f27a35" stroke-width="1"/>
<line x1="662.5" y1="179.9" x2="662.5" y2="188.7" stroke="#f27a35" stroke-width="1"/>
<rect x="661.5" y="184.5" width="2" height="1.0" fill="#f8a05c" stroke="#f27a35" stroke-width="1"/>
<line x1="669.5" y1="183.3" x2="669.5" y2="211.8" stroke="#f27a35" stroke-width="1"/>
<rect x="668.5" y="184.5" width="2" height="25.0" fill="#3a4048" stroke="#f27a35" stroke-width="1"/>
<line x1="676.5" y1="197.9" x2="676.5" y2="224.9" stroke="#f27a35" stroke-width="1"/>
<rect x="675.5" y="202.5" width="2" height="14.0" fill="#3a4048" stroke="#f27a35" stroke-width="1"/>
<line x1="684.5" y1="204.0" x2="684.5" y2="218.7" stroke="#f27a35" stroke-width="1"/>
<rect x="683.5" y="213.5" width="2" height="1.0" fill="#f8a05c" stroke="#f27a35" stroke-width="1"/>
<line x1="691.5" y1="201.0" x2="691.5" y2="215.6" stroke="#f27a35" stroke-width="1"/>
<rect x="690.5" y="206.5" width="2" height="5.0" fill="#f8a05c" stroke="#f27a35" stroke-width="1"/>
<line x1="698.5" y1="204.0" x2="698.5" y2="213.3" stroke="#f27a35" stroke-width="1"/>
<rect x="697.5" y="205.5" width="2" height="1.0" fill="#f8a05c" stroke="#f27a35" stroke-width="1"/>
<line x1="705.5" y1="201.0" x2="705.5" y2="211.0" stroke="#f27a35" stroke-width="1"/>
<rect x="704.5" y="205.5" width="2" height="1.0" fill="#f8a05c" stroke="#f27a35" stroke-width="1"/>
<line x1="712.5" y1="204.8" x2="712.5" y2="229.2" stroke="#f27a35" stroke-width="1"/>
<rect x="711.5" y="206.5" width="2" height="11.0" fill="#3a4048" stroke="#f27a35" stroke-width="1"/>
<line x1="719.5" y1="194.8" x2="719.5" y2="224.1" stroke="#f27a35" stroke-width="1"/>
<rect x="718.5" y="218.5" width="2" height="1.0" fill="#f8a05c" stroke="#f27a35" stroke-width="1"/>
<line x1="727.5" y1="193.2" x2="727.5" y2="217.9" stroke="#f27a35" stroke-width="1"/>
<rect x="726.5" y="196.5" width="2" height="20.0" fill="#f8a05c" stroke="#f27a35" stroke-width="1"/>
<line x1="734.5" y1="185.1" x2="734.5" y2="197.9" stroke="#f27a35" stroke-width="1"/>
<rect x="733.5" y="192.5" width="2" height="1.0" fill="#f8a05c" stroke="#f27a35" stroke-width="1"/>
<line x1="741.5" y1="190.9" x2="741.5" y2="197.9" stroke="#f27a35" stroke-width="1"/>
<rect x="740.5" y="192.5" width="2" height="1.0" fill="#f8a05c" stroke="#f27a35" stroke-width="1"/>
<line x1="748.5" y1="186.3" x2="748.5" y2="195.6" stroke="#f27a35" stroke-width="1"/>
<rect x="747.5" y="191.5" width="2" height="1.0" fill="#f8a05c" stroke="#f27a35" stroke-width="1"/>
<line x1="755.5" y1="180.4" x2="755.5" y2="204.5" stroke="#f27a35" stroke-width="1"/>
<rect x="754.5" y="189.5" width="2" height="4.0" fill="#3a4048" stroke="#f27a35" stroke-width="1"/>
<line x1="762.5" y1="186.7" x2="762.5" y2="213.0" stroke="#f27a35" stroke-width="1"/>
<rect x="761.5" y="193.5" width="2" height="8.0" fill="#3a4048" stroke="#f27a35" stroke-width="1"/>
<line x1="770.5" y1="184.0" x2="770.5" y2="202.9" stroke="#f27a35" stroke-width="1"/>
<rect x="769.5" y="190.5" width="2" height="11.0" fill="#f8a05c" stroke="#f27a35" stroke-width="1"/>
<line x1="777.5" y1="182.1" x2="777.5" y2="192.9" stroke="#f27a35" stroke-width="1"/>
<rect x="776.5" y="186.5" width="2" height="1.0" fill="#f8a05c" stroke="#f27a35" stroke-width="1"/>
<line x1="784.5" y1="172.1" x2="784.5" y2="189.8" stroke="#f27a35" stroke-width="1"/>
<rect x="783.5" y="182.5" width="2" height="6.0" fill="#f8a05c" stroke="#f27a35" stroke-width="1"/>
<line x1="791.5" y1="175.9" x2="791.5" y2="185.2" stroke="#f27a35" stroke-width="1"/>
<rect x="790.5" y="178.5" width="2" height="1.0" fill="#f8a05c" stroke="#f27a35" stroke-width="1"/>
<line x1="798.5" y1="168.2" x2="798.5" y2="191.0" stroke="#f27a35" stroke-width="1"/>
<rect x="797.5" y="187.5" width="2" height="1.0" fill="#f8a05c" stroke="#f27a35" stroke-width="1"/>
<line x1="805.5" y1="162.8" x2="805.5" y2="179.8" stroke="#f27a35" stroke-width="1"/>
<rect x="804.5" y="169.5" width="2" height="6.0" fill="#f8a05c" stroke="#f27a35" stroke-width="1"/>
<line x1="813.5" y1="159.0" x2="813.5" y2="188.6" stroke="#f27a35" stroke-width="1"/>
<rect x="812.5" y="165.5" width="2" height="1.0" fill="#f8a05c" stroke="#f27a35" stroke-width="1"/>
<line x1="820.5" y1="159.0" x2="820.5" y2="172.8" stroke="#f27a35" stroke-width="1"/>
<rect x="819.5" y="164.5" width="2" height="1.0" fill="#f8a05c" stroke="#f27a35" stroke-width="1"/>
<line x1="827.5" y1="159.7" x2="827.5" y2="167.4" stroke="#f27a35" stroke-width="1"/>
<rect x="826.5" y="162.5" width="2" height="1.0" fill="#f8a05c" stroke="#f27a35" stroke-width="1"/>
<line x1="834.5" y1="160.0" x2="834.5" y2="172.0" stroke="#f27a35" stroke-width="1"/>
<rect x="833.5" y="164.5" width="2" height="2.0" fill="#3a4048" stroke="#f27a35" stroke-width="1"/>
<line x1="841.5" y1="148.8" x2="841.5" y2="169.0" stroke="#f27a35" stroke-width="1"/>
<rect x="840.5" y="155.5" width="2" height="10.0" fill="#f8a05c" stroke="#f27a35" stroke-width="1"/>
<line x1="848.5" y1="139.7" x2="848.5" y2="191.1" stroke="#f27a35" stroke-width="1"/>
<rect x="847.5" y="154.5" width="2" height="22.0" fill="#3a4048" stroke="#f27a35" stroke-width="1"/>
<line x1="856.5" y1="173.5" x2="856.5" y2="196.7" stroke="#f27a35" stroke-width="1"/>
<rect x="855.5" y="175.5" width="2" height="13.0" fill="#3a4048" stroke="#f27a35" stroke-width="1"/>
<line x1="863.5" y1="186.9" x2="863.5" y2="198.0" stroke="#f27a35" stroke-width="1"/>
<rect x="862.5" y="187.5" width="2" height="10.0" fill="#3a4048" stroke="#f27a35" stroke-width="1"/>
<line x1="870.5" y1="194.2" x2="870.5" y2="206.1" stroke="#f27a35" stroke-width="1"/>
<rect x="869.5" y="195.5" width="2" height="8.0" fill="#3a4048" stroke="#f27a35" stroke-width="1"/>
<line x1="877.5" y1="200.1" x2="877.5" y2="206.1" stroke="#f27a35" stroke-width="1"/>
<rect x="876.5" y="202.5" width="2" height="1.0" fill="#f8a05c" stroke="#f27a35" stroke-width="1"/>
<polyline points="16.3,100.8 27.9,102.5 41.8,105.9 60.3,110.6 74.2,115.6 88.1,117.0 106.6,124.0 120.5,129.1 139.0,133.7 157.5,140.2 176.0,147.6 194.6,154.5 200.0,156.2 216.2,164.7 232.4,168.5 246.3,170.9 260.2,173.2 267.9,172.4 277.2,171.6 286.4,170.1 302.3,168.4 319.2,167.6 339.3,164.5 354.7,162.7 367.0,159.1 379.4,154.9 398.3,152.8 416.9,152.5 432.3,154.4 450.8,154.4 463.2,152.2 479.0,151.0 494.4,146.7 525.3,147.1 537.6,144.5 556.2,144.5 572.0,144.7 590.5,147.5 599.8,148.5 618.3,150.1 638.4,151.6 655.3,153.2 665.0,154.7 680.4,159.3 695.9,163.9 711.3,166.5 723.6,170.1 742.2,170.9 758.0,173.6 788.9,174.7 835.2,174.4 844.4,173.1 849.4,172.4 857.8,174.2 867.5,176.9 877.9,176.5" fill="none" stroke="#b02428" stroke-width="1.6"/>
<polyline points="16.3,70.7 27.9,80.5 48.7,100.1 67.2,114.0 81.1,121.0 88.1,124.4 102.0,134.9 115.9,146.4 132.1,154.1 143.6,159.2 152.9,163.8 165.6,168.9 176.0,176.5 189.9,187.4 203.8,196.7 215.4,202.5 224.7,204.8 238.6,205.6 261.7,204.5 267.9,201.7 283.3,192.5 298.8,186.3 320.8,175.0 339.3,167.6 354.7,162.2 368.6,150.6 376.3,146.3 385.6,144.4 395.3,142.5 404.5,140.5 411.5,142.5 424.6,144.5 440.0,148.7 447.7,151.0 460.0,150.2 472.4,144.8 486.7,138.6 497.5,134.3 514.5,134.8 522.2,136.8 539.2,135.6 550.0,137.1 556.2,138.3 567.0,141.0 579.7,140.8 587.4,143.9 602.9,150.9 613.7,152.4 626.0,154.3 641.4,156.3 655.3,160.4 664.6,164.0 680.4,173.6 695.9,180.4 711.3,185.5 723.6,189.1 737.5,190.2 749.9,190.2 765.0,191.7 776.5,191.7 788.9,189.0 804.3,187.0 819.7,180.9 835.2,179.0 842.5,177.0 852.2,177.2 860.6,179.3 870.3,182.5 877.9,184.4" fill="none" stroke="#1a1ab8" stroke-width="1.3"/>
<line x1="17" y1="186.8" x2="889.5" y2="186.8" stroke="#b82024" stroke-width="1.6"/>
<line x1="17" y1="203.5" x2="889.5" y2="203.5" stroke="#d6d6d6" stroke-width="1.4"/>
<line x1="17" y1="219" x2="889.5" y2="219" stroke="#3cc43c" stroke-width="1.6"/>
</g>
<rect x="14.5" y="216" width="6" height="6" fill="#eadfe8"/><rect x="14.5" y="218" width="6" height="2" fill="#d040c8"/>
<rect x="449" y="216" width="6" height="6" fill="#eadfe8"/><rect x="449" y="218" width="6" height="2" fill="#d040c8"/>
<rect x="883.5" y="216" width="6" height="6" fill="#eadfe8"/><rect x="883.5" y="218" width="6" height="2" fill="#d040c8"/>
<line x1="17.1" y1="288.3" x2="17.1" y2="307.6" stroke="#e86060" stroke-width="1.8"/>
<line x1="24.3" y1="288.3" x2="24.3" y2="307.6" stroke="#bc282c" stroke-width="1.8"/>
<line x1="31.5" y1="288.3" x2="31.5" y2="306.9" stroke="#bc282c" stroke-width="1.8"/>
<line x1="38.6" y1="288.3" x2="38.6" y2="305.6" stroke="#bc282c" stroke-width="1.8"/>
<line x1="45.8" y1="288.3" x2="45.8" y2="305" stroke="#bc282c" stroke-width="1.8"/>
<line x1="53.0" y1="288.3" x2="53.0" y2="303" stroke="#bc282c" stroke-width="1.8"/>
<line x1="60.2" y1="288.3" x2="60.2" y2="301" stroke="#bc282c" stroke-width="1.8"/>
<line x1="67.3" y1="288.3" x2="67.3" y2="299.1" stroke="#bc282c" stroke-width="1.8"/>
<line x1="74.5" y1="288.3" x2="74.5" y2="297.4" stroke="#bc282c" stroke-width="1.8"/>
<line x1="81.7" y1="288.3" x2="81.7" y2="295.6" stroke="#bc282c" stroke-width="1.8"/>
<line x1="88.8" y1="288.3" x2="88.8" y2="293.9" stroke="#bc282c" stroke-width="1.8"/>
<line x1="96.0" y1="288.3" x2="96.0" y2="293.9" stroke="#bc282c" stroke-width="1.8"/>
<line x1="103.2" y1="288.3" x2="103.2" y2="293.9" stroke="#bc282c" stroke-width="1.8"/>
<line x1="110.4" y1="288.3" x2="110.4" y2="293.9" stroke="#bc282c" stroke-width="1.8"/>
<line x1="117.5" y1="288.3" x2="117.5" y2="293.3" stroke="#bc282c" stroke-width="1.8"/>
<line x1="124.7" y1="288.3" x2="124.7" y2="290.4" stroke="#bc282c" stroke-width="1.8"/>
<line x1="131.9" y1="288.3" x2="131.9" y2="289.6" stroke="#bc282c" stroke-width="1.8"/>
<line x1="139.0" y1="288.3" x2="139.0" y2="289" stroke="#bc282c" stroke-width="1.8"/>
<line x1="146.2" y1="288.3" x2="146.2" y2="289" stroke="#bc282c" stroke-width="1.8"/>
<line x1="153.4" y1="288.3" x2="153.4" y2="289" stroke="#bc282c" stroke-width="1.8"/>
<line x1="160.5" y1="288.3" x2="160.5" y2="289" stroke="#bc282c" stroke-width="1.8"/>
<line x1="167.7" y1="288.3" x2="167.7" y2="290.3" stroke="#bc282c" stroke-width="1.8"/>
<line x1="174.9" y1="288.3" x2="174.9" y2="289" stroke="#bc282c" stroke-width="1.8"/>
<line x1="182.1" y1="288.3" x2="182.1" y2="291.7" stroke="#bc282c" stroke-width="1.8"/>
<line x1="189.2" y1="288.3" x2="189.2" y2="291.3" stroke="#bc282c" stroke-width="1.8"/>
<line x1="196.4" y1="288.3" x2="196.4" y2="289" stroke="#bc282c" stroke-width="1.8"/>
<line x1="203.6" y1="288.3" x2="203.6" y2="289" stroke="#bc282c" stroke-width="1.8"/>
<line x1="210.7" y1="288.3" x2="210.7" y2="289" stroke="#bc282c" stroke-width="1.8"/>
<line x1="217.9" y1="288.3" x2="217.9" y2="287.5" stroke="#bc282c" stroke-width="1.8"/>
<line x1="225.1" y1="288.3" x2="225.1" y2="286.1" stroke="#bc282c" stroke-width="1.8"/>
<line x1="232.3" y1="288.3" x2="232.3" y2="286.1" stroke="#bc282c" stroke-width="1.8"/>
<line x1="239.4" y1="288.3" x2="239.4" y2="284.1" stroke="#bc282c" stroke-width="1.8"/>
<line x1="246.6" y1="288.3" x2="246.6" y2="282.2" stroke="#bc282c" stroke-width="1.8"/>
<line x1="253.8" y1="288.3" x2="253.8" y2="281.5" stroke="#bc282c" stroke-width="1.8"/>
<line x1="260.9" y1="288.3" x2="260.9" y2="281.3" stroke="#bc282c" stroke-width="1.8"/>
<line x1="268.1" y1="288.3" x2="268.1" y2="279.6" stroke="#bc282c" stroke-width="1.8"/>
<line x1="275.3" y1="288.3" x2="275.3" y2="277.4" stroke="#bc282c" stroke-width="1.8"/>
<line x1="282.5" y1="288.3" x2="282.5" y2="276.3" stroke="#bc282c" stroke-width="1.8"/>
<line x1="289.6" y1="288.3" x2="289.6" y2="277.6" stroke="#bc282c" stroke-width="1.8"/>
<line x1="296.8" y1="288.3" x2="296.8" y2="277.6" stroke="#bc282c" stroke-width="1.8"/>
<line x1="304.0" y1="288.3" x2="304.0" y2="278.3" stroke="#bc282c" stroke-width="1.8"/>
<line x1="311.1" y1="288.3" x2="311.1" y2="278.9" stroke="#bc282c" stroke-width="1.8"/>
<line x1="318.3" y1="288.3" x2="318.3" y2="278.9" stroke="#bc282c" stroke-width="1.8"/>
<line x1="325.5" y1="288.3" x2="325.5" y2="279.6" stroke="#bc282c" stroke-width="1.8"/>
<line x1="332.7" y1="288.3" x2="332.7" y2="280.9" stroke="#bc282c" stroke-width="1.8"/>
<line x1="339.8" y1="288.3" x2="339.8" y2="280.2" stroke="#bc282c" stroke-width="1.8"/>
<line x1="347.0" y1="288.3" x2="347.0" y2="283.5" stroke="#bc282c" stroke-width="1.8"/>
<line x1="354.2" y1="288.3" x2="354.2" y2="283.5" stroke="#bc282c" stroke-width="1.8"/>
<line x1="361.3" y1="288.3" x2="361.3" y2="281.8" stroke="#bc282c" stroke-width="1.8"/>
<line x1="368.5" y1="288.3" x2="368.5" y2="280.2" stroke="#bc282c" stroke-width="1.8"/>
<line x1="375.7" y1="288.3" x2="375.7" y2="281.5" stroke="#bc282c" stroke-width="1.8"/>
<line x1="382.9" y1="288.3" x2="382.9" y2="284.4" stroke="#bc282c" stroke-width="1.8"/>
<line x1="390.0" y1="288.3" x2="390.0" y2="286.1" stroke="#bc282c" stroke-width="1.8"/>
<line x1="397.2" y1="288.3" x2="397.2" y2="287.5" stroke="#bc282c" stroke-width="1.8"/>
<line x1="404.4" y1="288.3" x2="404.4" y2="289" stroke="#bc282c" stroke-width="1.8"/>
<line x1="411.5" y1="288.3" x2="411.5" y2="291.7" stroke="#bc282c" stroke-width="1.8"/>
<line x1="418.7" y1="288.3" x2="418.7" y2="293.5" stroke="#bc282c" stroke-width="1.8"/>
<line x1="425.9" y1="288.3" x2="425.9" y2="293.9" stroke="#bc282c" stroke-width="1.8"/>
<line x1="433.0" y1="288.3" x2="433.0" y2="295.2" stroke="#bc282c" stroke-width="1.8"/>
<line x1="440.2" y1="288.3" x2="440.2" y2="295.2" stroke="#bc282c" stroke-width="1.8"/>
<line x1="447.4" y1="288.3" x2="447.4" y2="295.2" stroke="#bc282c" stroke-width="1.8"/>
<line x1="454.6" y1="288.3" x2="454.6" y2="293.9" stroke="#bc282c" stroke-width="1.8"/>
<line x1="461.7" y1="288.3" x2="461.7" y2="290.6" stroke="#bc282c" stroke-width="1.8"/>
<line x1="547.8" y1="288.3" x2="547.8" y2="291.3" stroke="#bc282c" stroke-width="1.8"/>
<line x1="555.0" y1="288.3" x2="555.0" y2="291.3" stroke="#bc282c" stroke-width="1.8"/>
<line x1="562.1" y1="288.3" x2="562.1" y2="291.7" stroke="#bc282c" stroke-width="1.8"/>
<line x1="569.3" y1="288.3" x2="569.3" y2="291.7" stroke="#bc282c" stroke-width="1.8"/>
<line x1="576.5" y1="288.3" x2="576.5" y2="290.6" stroke="#bc282c" stroke-width="1.8"/>
<line x1="583.6" y1="288.3" x2="583.6" y2="291.3" stroke="#bc282c" stroke-width="1.8"/>
<line x1="590.8" y1="288.3" x2="590.8" y2="293.3" stroke="#bc282c" stroke-width="1.8"/>
<line x1="598.0" y1="288.3" x2="598.0" y2="292" stroke="#bc282c" stroke-width="1.8"/>
<line x1="655.3" y1="288.3" x2="655.3" y2="290" stroke="#bc282c" stroke-width="1.8"/>
<line x1="662.5" y1="288.3" x2="662.5" y2="290.9" stroke="#bc282c" stroke-width="1.8"/>
<line x1="669.7" y1="288.3" x2="669.7" y2="291.7" stroke="#bc282c" stroke-width="1.8"/>
<line x1="676.9" y1="288.3" x2="676.9" y2="292.6" stroke="#bc282c" stroke-width="1.8"/>
<line x1="684.0" y1="288.3" x2="684.0" y2="292.6" stroke="#bc282c" stroke-width="1.8"/>
<line x1="691.2" y1="288.3" x2="691.2" y2="293.3" stroke="#bc282c" stroke-width="1.8"/>
<line x1="698.4" y1="288.3" x2="698.4" y2="291.3" stroke="#bc282c" stroke-width="1.8"/>
<line x1="705.5" y1="288.3" x2="705.5" y2="290.9" stroke="#bc282c" stroke-width="1.8"/>
<line x1="712.7" y1="288.3" x2="712.7" y2="290.9" stroke="#bc282c" stroke-width="1.8"/>
<line x1="719.9" y1="288.3" x2="719.9" y2="290.9" stroke="#bc282c" stroke-width="1.8"/>
<line x1="727.1" y1="288.3" x2="727.1" y2="289.5" stroke="#bc282c" stroke-width="1.8"/>
<line x1="734.2" y1="288.3" x2="734.2" y2="289" stroke="#bc282c" stroke-width="1.8"/>
<line x1="741.4" y1="288.3" x2="741.4" y2="287.5" stroke="#bc282c" stroke-width="1.8"/>
<line x1="748.6" y1="288.3" x2="748.6" y2="286.1" stroke="#bc282c" stroke-width="1.8"/>
<line x1="755.7" y1="288.3" x2="755.7" y2="286.1" stroke="#bc282c" stroke-width="1.8"/>
<line x1="762.9" y1="288.3" x2="762.9" y2="285.8" stroke="#bc282c" stroke-width="1.8"/>
<line x1="770.1" y1="288.3" x2="770.1" y2="286.1" stroke="#bc282c" stroke-width="1.8"/>
<line x1="777.3" y1="288.3" x2="777.3" y2="286.1" stroke="#bc282c" stroke-width="1.8"/>
<line x1="784.4" y1="288.3" x2="784.4" y2="285.4" stroke="#bc282c" stroke-width="1.8"/>
<line x1="791.6" y1="288.3" x2="791.6" y2="284.8" stroke="#bc282c" stroke-width="1.8"/>
<line x1="798.8" y1="288.3" x2="798.8" y2="283.5" stroke="#bc282c" stroke-width="1.8"/>
<line x1="805.9" y1="288.3" x2="805.9" y2="283.5" stroke="#bc282c" stroke-width="1.8"/>
<line x1="813.1" y1="288.3" x2="813.1" y2="283.9" stroke="#bc282c" stroke-width="1.8"/>
<line x1="820.3" y1="288.3" x2="820.3" y2="284.4" stroke="#bc282c" stroke-width="1.8"/>
<line x1="827.5" y1="288.3" x2="827.5" y2="284.2" stroke="#bc282c" stroke-width="1.8"/>
<line x1="834.6" y1="288.3" x2="834.6" y2="284.4" stroke="#bc282c" stroke-width="1.8"/>
<line x1="841.8" y1="288.3" x2="841.8" y2="285.7" stroke="#bc282c" stroke-width="1.8"/>
<polyline points="16.9,294.6 24.4,300.8 33.5,306.3 47.9,312.1 58.3,314.3 79.1,314.7 89.5,314.3 97.3,316.7 107.8,319.0 120.8,319.0 132.5,318.3 137.7,316.4 144.2,317.3 154.6,316.0 164.0,314.7 175.6,315.4 182.1,319.0 205.6,319.0 212.1,317.7 227.7,314.1 238.1,310.8 251.1,305.6 266.8,299.1 277.2,291.3 285.0,288.7 298.0,282.2 310.2,281.3 324.5,275.0 350.6,275.0 367.5,267.2 374.0,266.2 380.5,267.2 388.3,270.5 401.4,271.1 419.6,279.6 432.6,284.4 445.6,287.0 455.0,287.0 463.0,284.4 476.0,281.5 489.0,278.9 498.2,277.4 508.6,278.9 517.7,282.2 530.7,285.2 541.1,283.5 554.2,287.0 567.2,289.6 580.2,289.6 590.6,293.3 602.8,295.2 610.6,296.5 651.0,296.5 660.1,297.8 667.9,299.8 675.7,303.4 686.1,305.0 709.6,305.6 723.9,306.3 731.7,303.9 745.0,301.0 753.0,299.1 772.6,296.9 785.6,293.3 805.1,289.3 824.6,285.4 839.0,282.8 850.7,283.1 863.7,286.5 870.2,288.7 878.0,291.3" fill="none" stroke="#141478" stroke-width="1.4"/>
<circle cx="24.3" cy="280.5" r="1.7" fill="#e52a2a"/>
<circle cx="31.5" cy="284.4" r="1.7" fill="#e52a2a"/>
<circle cx="38.6" cy="289.3" r="1.7" fill="#e52a2a"/>
<circle cx="45.8" cy="293.3" r="1.7" fill="#e52a2a"/>
<circle cx="53.0" cy="297.4" r="1.7" fill="#e52a2a"/>
<circle cx="60.2" cy="300.4" r="1.7" fill="#e52a2a"/>
<circle cx="67.3" cy="303.4" r="1.7" fill="#e52a2a"/>
<circle cx="74.5" cy="305.2" r="1.7" fill="#e52a2a"/>
<circle cx="81.7" cy="307.6" r="1.7" fill="#e52a2a"/>
<circle cx="88.8" cy="308.5" r="1.7" fill="#e52a2a"/>
<circle cx="96.0" cy="309.5" r="1.7" fill="#e52a2a"/>
<circle cx="103.2" cy="311.5" r="1.7" fill="#e52a2a"/>
<circle cx="110.4" cy="312.1" r="1.7" fill="#e52a2a"/>
<circle cx="117.5" cy="314.7" r="1.7" fill="#e52a2a"/>
<circle cx="124.7" cy="314.3" r="1.7" fill="#e52a2a"/>
<circle cx="131.9" cy="315.4" r="1.7" fill="#e52a2a"/>
<circle cx="139.0" cy="315.4" r="1.7" fill="#e52a2a"/>
<circle cx="146.2" cy="315.4" r="1.7" fill="#e52a2a"/>
<circle cx="153.4" cy="315.4" r="1.7" fill="#e52a2a"/>
<circle cx="160.5" cy="315.4" r="1.7" fill="#e52a2a"/>
<circle cx="167.7" cy="315.4" r="1.7" fill="#e52a2a"/>
<circle cx="174.9" cy="315.4" r="1.7" fill="#e52a2a"/>
<circle cx="182.1" cy="315.4" r="1.7" fill="#e52a2a"/>
<circle cx="189.2" cy="316.4" r="1.7" fill="#e52a2a"/>
<circle cx="196.4" cy="316.4" r="1.7" fill="#e52a2a"/>
<circle cx="203.6" cy="317.3" r="1.7" fill="#e52a2a"/>
<circle cx="210.7" cy="317.3" r="1.7" fill="#e52a2a"/>
<circle cx="217.9" cy="317.3" r="1.7" fill="#e52a2a"/>
<circle cx="225.1" cy="316.4" r="1.7" fill="#e52a2a"/>
<circle cx="232.3" cy="315.4" r="1.7" fill="#e52a2a"/>
<circle cx="239.4" cy="314.3" r="1.7" fill="#e52a2a"/>
<circle cx="246.6" cy="312.5" r="1.7" fill="#e52a2a"/>
<circle cx="253.8" cy="311.2" r="1.7" fill="#e52a2a"/>
<circle cx="260.9" cy="309.1" r="1.7" fill="#e52a2a"/>
<circle cx="268.1" cy="306.3" r="1.7" fill="#e52a2a"/>
<circle cx="275.3" cy="303.4" r="1.7" fill="#e52a2a"/>
<circle cx="282.5" cy="300.4" r="1.7" fill="#e52a2a"/>
<circle cx="289.6" cy="298.5" r="1.7" fill="#e52a2a"/>
<circle cx="296.8" cy="295.6" r="1.7" fill="#e52a2a"/>
<circle cx="304.0" cy="292.6" r="1.7" fill="#e52a2a"/>
<circle cx="311.1" cy="289.3" r="1.7" fill="#e52a2a"/>
<circle cx="318.3" cy="287.0" r="1.7" fill="#e52a2a"/>
<circle cx="325.5" cy="284.4" r="1.7" fill="#e52a2a"/>
<circle cx="332.7" cy="282.6" r="1.7" fill="#e52a2a"/>
<circle cx="339.8" cy="281.3" r="1.7" fill="#e52a2a"/>
<circle cx="347.0" cy="279.2" r="1.7" fill="#e52a2a"/>
<circle cx="354.2" cy="278.3" r="1.7" fill="#e52a2a"/>
<circle cx="361.3" cy="276.6" r="1.7" fill="#e52a2a"/>
<circle cx="368.5" cy="274.4" r="1.7" fill="#e52a2a"/>
<circle cx="375.7" cy="272.4" r="1.7" fill="#e52a2a"/>
<circle cx="382.9" cy="271.1" r="1.7" fill="#e52a2a"/>
<circle cx="390.0" cy="271.4" r="1.7" fill="#e52a2a"/>
<circle cx="397.2" cy="270.5" r="1.7" fill="#e52a2a"/>
<circle cx="404.4" cy="271.4" r="1.7" fill="#e52a2a"/>
<circle cx="411.5" cy="271.4" r="1.7" fill="#e52a2a"/>
<circle cx="418.7" cy="273.5" r="1.7" fill="#e52a2a"/>
<circle cx="425.9" cy="274.4" r="1.7" fill="#e52a2a"/>
<circle cx="433.0" cy="276.3" r="1.7" fill="#e52a2a"/>
<circle cx="440.2" cy="277.4" r="1.7" fill="#e52a2a"/>
<circle cx="447.4" cy="279.2" r="1.7" fill="#e52a2a"/>
<circle cx="454.6" cy="280.2" r="1.7" fill="#e52a2a"/>
<circle cx="461.7" cy="281.3" r="1.7" fill="#e52a2a"/>
<circle cx="468.9" cy="281.3" r="1.7" fill="#e52a2a"/>
<circle cx="476.1" cy="281.3" r="1.7" fill="#e52a2a"/>
<circle cx="483.2" cy="281.5" r="1.7" fill="#e52a2a"/>
<circle cx="490.4" cy="280.5" r="1.7" fill="#e52a2a"/>
<circle cx="497.6" cy="279.2" r="1.7" fill="#e52a2a"/>
<circle cx="504.8" cy="279.2" r="1.7" fill="#e52a2a"/>
<circle cx="511.9" cy="279.2" r="1.7" fill="#e52a2a"/>
<circle cx="519.1" cy="280.2" r="1.7" fill="#e52a2a"/>
<circle cx="526.3" cy="280.2" r="1.7" fill="#e52a2a"/>
<circle cx="533.4" cy="281.3" r="1.7" fill="#e52a2a"/>
<circle cx="540.6" cy="281.3" r="1.7" fill="#e52a2a"/>
<circle cx="547.8" cy="282.2" r="1.7" fill="#e52a2a"/>
<circle cx="555.0" cy="283.1" r="1.7" fill="#e52a2a"/>
<circle cx="562.1" cy="283.1" r="1.7" fill="#e52a2a"/>
<circle cx="569.3" cy="284.4" r="1.7" fill="#e52a2a"/>
<circle cx="576.5" cy="285.2" r="1.7" fill="#e52a2a"/>
<circle cx="583.6" cy="286.1" r="1.7" fill="#e52a2a"/>
<circle cx="590.8" cy="287.4" r="1.7" fill="#e52a2a"/>
<circle cx="598.0" cy="288.7" r="1.7" fill="#e52a2a"/>
<circle cx="605.2" cy="290.4" r="1.7" fill="#e52a2a"/>
<circle cx="612.3" cy="291.3" r="1.7" fill="#e52a2a"/>
<circle cx="619.5" cy="292.2" r="1.7" fill="#e52a2a"/>
<circle cx="626.7" cy="292.6" r="1.7" fill="#e52a2a"/>
<circle cx="633.8" cy="293.5" r="1.7" fill="#e52a2a"/>
<circle cx="641.0" cy="293.5" r="1.7" fill="#e52a2a"/>
<circle cx="648.2" cy="294.3" r="1.7" fill="#e52a2a"/>
<circle cx="655.3" cy="294.3" r="1.7" fill="#e52a2a"/>
<circle cx="662.5" cy="295.6" r="1.7" fill="#e52a2a"/>
<circle cx="669.7" cy="296.5" r="1.7" fill="#e52a2a"/>
<circle cx="676.9" cy="297.4" r="1.7" fill="#e52a2a"/>
<circle cx="684.0" cy="298.5" r="1.7" fill="#e52a2a"/>
<circle cx="691.2" cy="299.5" r="1.7" fill="#e52a2a"/>
<circle cx="698.4" cy="300.4" r="1.7" fill="#e52a2a"/>
<circle cx="705.5" cy="301.3" r="1.7" fill="#e52a2a"/>
<circle cx="712.7" cy="302.4" r="1.7" fill="#e52a2a"/>
<circle cx="719.9" cy="302.6" r="1.7" fill="#e52a2a"/>
<circle cx="727.1" cy="303.4" r="1.7" fill="#e52a2a"/>
<circle cx="734.2" cy="302.4" r="1.7" fill="#e52a2a"/>
<circle cx="741.4" cy="302.6" r="1.7" fill="#e52a2a"/>
<circle cx="748.6" cy="301.3" r="1.7" fill="#e52a2a"/>
<circle cx="755.7" cy="301.3" r="1.7" fill="#e52a2a"/>
<circle cx="762.9" cy="300.4" r="1.7" fill="#e52a2a"/>
<circle cx="770.1" cy="299.5" r="1.7" fill="#e52a2a"/>
<circle cx="777.3" cy="298.5" r="1.7" fill="#e52a2a"/>
<circle cx="784.4" cy="297.2" r="1.7" fill="#e52a2a"/>
<circle cx="791.6" cy="296.5" r="1.7" fill="#e52a2a"/>
<circle cx="798.8" cy="295.6" r="1.7" fill="#e52a2a"/>
<circle cx="805.9" cy="293.3" r="1.7" fill="#e52a2a"/>
<circle cx="813.1" cy="292.6" r="1.7" fill="#e52a2a"/>
<circle cx="820.3" cy="291.7" r="1.7" fill="#e52a2a"/>
<circle cx="827.5" cy="289.3" r="1.7" fill="#e52a2a"/>
<circle cx="834.6" cy="288.3" r="1.7" fill="#e52a2a"/>
<circle cx="841.8" cy="287.0" r="1.7" fill="#e52a2a"/>
<circle cx="849.0" cy="286.5" r="1.7" fill="#e52a2a"/>
<circle cx="856.1" cy="286.7" r="1.7" fill="#e52a2a"/>
<circle cx="863.3" cy="286.5" r="1.7" fill="#e52a2a"/>
<circle cx="870.5" cy="286.5" r="1.7" fill="#e52a2a"/>
<circle cx="877.6" cy="287.4" r="1.7" fill="#e52a2a"/>
<text x="18.5" y="275" font-family='"Liberation Sans", sans-serif' font-size="10.5" fill="#1c1c7a" textLength="28" lengthAdjust="spacingAndGlyphs">MACD</text>
<line x1="33.5" y1="335" x2="878" y2="335" stroke="#1c1ca8" stroke-width="1.8"/>
<line x1="17" y1="390.7" x2="878" y2="390.7" stroke="#1c1ca8" stroke-width="1.8"/>
<polyline points="17.0,386.0 77.2,382.0 81.4,379.1 86.9,382.3 95.4,390.1" fill="none" stroke="#ee8a36" stroke-width="1.0" stroke-linejoin="round"/>
<polyline points="95.4,390.1 102.5,392.7 110.4,393.4" fill="none" stroke="#28c828" stroke-width="1.0" stroke-linejoin="round"/>
<polyline points="110.4,393.4 115.6,390.1 124.7,384.0 131.2,385.2 137.7,383.0 146.8,389.5 157.2,387.2 167.2,380.4 171.7,388.5" fill="none" stroke="#ee8a36" stroke-width="1.0" stroke-linejoin="round"/>
<polyline points="171.7,388.5 174.3,395.0 182.1,398.3 188.0,390.5" fill="none" stroke="#28c828" stroke-width="1.0" stroke-linejoin="round"/>
<polyline points="188.0,390.5 190.0,389.2 206.2,389.2" fill="none" stroke="#ee8a36" stroke-width="1.0" stroke-linejoin="round"/>
<polyline points="206.2,389.2 210.8,390.5" fill="none" stroke="#28c828" stroke-width="1.0" stroke-linejoin="round"/>
<polyline points="210.8,390.5 218.6,382.6 223.8,380.7 231.6,378.1 239.4,366.4 245.9,367.4 251.8,368.7 260.3,366.4 269.4,349.4 275.9,342.9 288.9,351.4 296.7,346.2 303.9,342.9 311.5,349.7 320.0,341.6 325.2,340.3 332.3,352.7 339.5,349.2 346.7,348.4 353.8,344.9" fill="none" stroke="#ee8a36" stroke-width="1.0" stroke-linejoin="round"/>
<polyline points="353.8,344.9 361.0,333.8 367.5,331.5" fill="none" stroke="#c030d0" stroke-width="1.0" stroke-linejoin="round"/>
<polyline points="367.5,331.5 375.3,339.0 383.8,357.3 396.1,352.7 411.8,366.6 418.9,369.6 426.1,366.6 433.9,371.6 440.4,368.3 448.2,366.4 456.5,360.5 463.0,353.3 469.5,349.4 480.0,348.1 482.6,346.8 491.7,348.1 497.1,344.5 504.7,364.4 511.2,363.5 522.9,365.7 526.2,366.6 533.3,364.4 540.5,352.7 548.3,370.0 555.5,366.6 562.0,369.6 571.1,364.8 576.3,366.4 584.1,371.8 591.3,381.7 598.9,372.2 613.2,373.1 618.4,370.9 626.3,372.2 634.1,366.4 641.9,373.5 648.1,370.3 655.5,377.0 662.1,377.4 677.7,389.2 691.4,382.3 705.7,382.3 713.5,387.2 720.0,386.2 727.8,370.0 733.0,368.3 748.5,366.4 763.2,373.1 770.6,364.4 777.8,364.4 785.6,358.6 792.1,357.3 799.2,356.6 807.7,350.1 813.6,347.1 818.1,348.8 823.3,349.4 827.2,348.4 835.1,350.5 842.9,342.3 849.4,361.2 857.2,370.3 867.6,377.4 871.5,379.1 878.0,378.3" fill="none" stroke="#ee8a36" stroke-width="1.0" stroke-linejoin="round"/>
<text x="18.5" y="339.7" font-family='"Liberation Sans", sans-serif' font-size="10.5" fill="#f08a30" textLength="14.8" lengthAdjust="spacingAndGlyphs">RSI</text>
<rect x="16.5" y="37.5" width="873" height="220.0" fill="none" stroke="#a6b8c8" stroke-width="1.2"/>
<rect x="16.5" y="263.5" width="873" height="59.0" fill="none" stroke="#a6b8c8" stroke-width="1.2"/>
<rect x="16.5" y="328.5" width="873" height="73.0" fill="none" stroke="#a6b8c8" stroke-width="1.2"/>
<rect x="16.2" y="37.2" width="30.8" height="21.6" fill="#efefef"/><rect x="16.2" y="37.2" width="30.8" height="4.5" fill="#cfcfcf"/>
<rect x="20.3" y="45.3" width="9.4" height="9.4" rx="1.5" fill="url(#gr)" stroke="#9a1c20" stroke-width="0.8"/>
<rect x="33.2" y="45.3" width="9.4" height="9.4" rx="1.5" fill="url(#gb)" stroke="#1c5c90" stroke-width="0.8"/>
<rect x="47" y="39" width="246" height="14" fill="#3a4048"/>
<text x="47" y="49.5" font-family='"Liberation Sans", sans-serif' font-size="11.5" fill="#1c1ce0" textLength="105" lengthAdjust="spacingAndGlyphs">ential_Moving_Average</text>
<text x="156.3" y="49.5" font-family='"Liberation Sans", sans-serif' font-size="11.5" fill="#d42020" textLength="134" lengthAdjust="spacingAndGlyphs">Exponential_Moving_Average</text>
<line x1="17" y1="288.3" x2="17" y2="307.6" stroke="#e86a6a" stroke-width="2"/>
<line x1="889.5" y1="47.3" x2="893" y2="47.3" stroke="#a9b9c8" stroke-width="1"/>
<line x1="889.5" y1="73.5" x2="893" y2="73.5" stroke="#a9b9c8" stroke-width="1"/>
<line x1="889.5" y1="99.7" x2="893" y2="99.7" stroke="#a9b9c8" stroke-width="1"/>
<line x1="889.5" y1="125.9" x2="893" y2="125.9" stroke="#a9b9c8" stroke-width="1"/>
<line x1="889.5" y1="152.1" x2="893" y2="152.1" stroke="#a9b9c8" stroke-width="1"/>
<line x1="889.5" y1="178.3" x2="893" y2="178.3" stroke="#a9b9c8" stroke-width="1"/>
<line x1="889.5" y1="204.5" x2="893" y2="204.5" stroke="#a9b9c8" stroke-width="1"/>
<line x1="889.5" y1="230.7" x2="893" y2="230.7" stroke="#a9b9c8" stroke-width="1"/>
<line x1="889.5" y1="288.5" x2="893" y2="288.5" stroke="#a9b9c8" stroke-width="1"/>
<line x1="889.5" y1="315.6" x2="893" y2="315.6" stroke="#a9b9c8" stroke-width="1"/>
<line x1="889.5" y1="348.5" x2="893" y2="348.5" stroke="#a9b9c8" stroke-width="1"/>
<line x1="889.5" y1="376.2" x2="893" y2="376.2" stroke="#a9b9c8" stroke-width="1"/>
<line x1="24.3" y1="401" x2="24.3" y2="405" stroke="#a9b9c8" stroke-width="1"/>
<line x1="67.3" y1="401" x2="67.3" y2="405" stroke="#a9b9c8" stroke-width="1"/>
<line x1="110.3" y1="401" x2="110.3" y2="405" stroke="#a9b9c8" stroke-width="1"/>
<line x1="153.2" y1="401" x2="153.2" y2="405" stroke="#a9b9c8" stroke-width="1"/>
<line x1="196.3" y1="401" x2="196.3" y2="405" stroke="#a9b9c8" stroke-width="1"/>
<line x1="232.8" y1="401" x2="232.8" y2="405" stroke="#a9b9c8" stroke-width="1"/>
<line x1="253.6" y1="401" x2="253.6" y2="405" stroke="#a9b9c8" stroke-width="1"/>
<line x1="296.6" y1="401" x2="296.6" y2="405" stroke="#a9b9c8" stroke-width="1"/>
<line x1="339.6" y1="401" x2="339.6" y2="405" stroke="#a9b9c8" stroke-width="1"/>
<line x1="368.5" y1="401" x2="368.5" y2="405" stroke="#a9b9c8" stroke-width="1"/>
<line x1="397.4" y1="401" x2="397.4" y2="405" stroke="#a9b9c8" stroke-width="1"/>
<line x1="440.4" y1="401" x2="440.4" y2="405" stroke="#a9b9c8" stroke-width="1"/>
<line x1="483.4" y1="401" x2="483.4" y2="405" stroke="#a9b9c8" stroke-width="1"/>
<line x1="526.4" y1="401" x2="526.4" y2="405" stroke="#a9b9c8" stroke-width="1"/>
<line x1="569.3" y1="401" x2="569.3" y2="405" stroke="#a9b9c8" stroke-width="1"/>
<line x1="612.3" y1="401" x2="612.3" y2="405" stroke="#a9b9c8" stroke-width="1"/>
<line x1="655.3" y1="401" x2="655.3" y2="405" stroke="#a9b9c8" stroke-width="1"/>
<line x1="698.4" y1="401" x2="698.4" y2="405" stroke="#a9b9c8" stroke-width="1"/>
<line x1="741.5" y1="401" x2="741.5" y2="405" stroke="#a9b9c8" stroke-width="1"/>
<line x1="784.4" y1="401" x2="784.4" y2="405" stroke="#a9b9c8" stroke-width="1"/>
<line x1="827.3" y1="401" x2="827.3" y2="405" stroke="#a9b9c8" stroke-width="1"/>
<line x1="870.5" y1="401" x2="870.5" y2="405" stroke="#a9b9c8" stroke-width="1"/>
<text x="897" y="54.0" font-family='"Liberation Sans", sans-serif' font-size="11.2" fill="#f4f2ee" stroke="#f4f2ee" stroke-width="0.15" textLength="32.5" lengthAdjust="spacingAndGlyphs">1.3300</text>
<text x="897" y="80.2" font-family='"Liberation Sans", sans-serif' font-size="11.2" fill="#f4f2ee" stroke="#f4f2ee" stroke-width="0.15" textLength="32.5" lengthAdjust="spacingAndGlyphs">1.3250</text>
<text x="897" y="106.4" font-family='"Liberation Sans", sans-serif' font-size="11.2" fill="#f4f2ee" stroke="#f4f2ee" stroke-width="0.15" textLength="32.5" lengthAdjust="spacingAndGlyphs">1.3200</text>
<text x="897" y="132.6" font-family='"Liberation Sans", sans-serif' font-size="11.2" fill="#f4f2ee" stroke="#f4f2ee" stroke-width="0.15" textLength="32.5" lengthAdjust="spacingAndGlyphs">1.3150</text>
<text x="897" y="158.8" font-family='"Liberation Sans", sans-serif' font-size="11.2" fill="#f4f2ee" stroke="#f4f2ee" stroke-width="0.15" textLength="32.5" lengthAdjust="spacingAndGlyphs">1.3100</text>
<text x="897" y="185.0" font-family='"Liberation Sans", sans-serif' font-size="11.2" fill="#f4f2ee" stroke="#f4f2ee" stroke-width="0.15" textLength="32.5" lengthAdjust="spacingAndGlyphs">1.3050</text>
<text x="897" y="237.4" font-family='"Liberation Sans", sans-serif' font-size="11.2" fill="#f4f2ee" stroke="#f4f2ee" stroke-width="0.15" textLength="32.5" lengthAdjust="spacingAndGlyphs">1.2950</text>
<text x="897.5" y="294.8" font-family='"Liberation Sans", sans-serif' font-size="11.2" fill="#f4f2ee" stroke="#f4f2ee" stroke-width="0.15" textLength="33.8" lengthAdjust="spacingAndGlyphs">+0.000</text>
<text x="897" y="322.1" font-family='"Liberation Sans", sans-serif' font-size="11.2" fill="#f4f2ee" stroke="#f4f2ee" stroke-width="0.15" textLength="30" lengthAdjust="spacingAndGlyphs">-0.005</text>
<text x="897" y="355" font-family='"Liberation Sans", sans-serif' font-size="11.2" fill="#f4f2ee" stroke="#f4f2ee" stroke-width="0.15">60</text>
<text x="897" y="382.8" font-family='"Liberation Sans", sans-serif' font-size="11.2" fill="#f4f2ee" stroke="#f4f2ee" stroke-width="0.15">40</text>
<rect x="889.3" y="193" width="47.7" height="21" fill="#ffffff"/>
<text x="898" y="207" font-family='"Liberation Sans", sans-serif' font-size="11.2" fill="#404452" textLength="32.5" lengthAdjust="spacingAndGlyphs">1.3002</text>
<rect x="722.5" y="223" width="166" height="13" fill="#3a4048"/>
<text x="724.3" y="233.2" font-family='"Liberation Sans", sans-serif' font-size="11.5" fill="#f0f0f0" stroke="#f0f0f0" stroke-width="0.4" textLength="163.4" lengthAdjust="spacingAndGlyphs">Горизонтальная линия 1.29708</text>
<text x="24.5" y="424" font-family='"Liberation Sans", sans-serif' font-size="11" fill="#f4f2ee" stroke="#f4f2ee" stroke-width="0.15" text-anchor="end">18</text><text x="24.3" y="424" font-family='"Liberation Sans", sans-serif' font-size="11" fill="#f4f2ee" stroke="#f4f2ee" stroke-width="0.15">/Ср</text>
<text x="67.5" y="424" font-family='"Liberation Sans", sans-serif' font-size="11" fill="#f4f2ee" stroke="#f4f2ee" stroke-width="0.15" text-anchor="end">19</text><text x="67.3" y="424" font-family='"Liberation Sans", sans-serif' font-size="11" fill="#f4f2ee" stroke="#f4f2ee" stroke-width="0.15">/Чт</text>
<text x="110.5" y="424" font-family='"Liberation Sans", sans-serif' font-size="11" fill="#f4f2ee" stroke="#f4f2ee" stroke-width="0.15" text-anchor="end">20</text><text x="110.3" y="424" font-family='"Liberation Sans", sans-serif' font-size="11" fill="#f4f2ee" stroke="#f4f2ee" stroke-width="0.15">/Пт</text>
<text x="153.39999999999998" y="424" font-family='"Liberation Sans", sans-serif' font-size="11" fill="#f4f2ee" stroke="#f4f2ee" stroke-width="0.15" text-anchor="end">23</text><text x="153.2" y="424" font-family='"Liberation Sans", sans-serif' font-size="11" fill="#f4f2ee" stroke="#f4f2ee" stroke-width="0.15">/Пн</text>
<text x="196.5" y="424" font-family='"Liberation Sans", sans-serif' font-size="11" fill="#f4f2ee" stroke="#f4f2ee" stroke-width="0.15" text-anchor="end">24</text><text x="196.3" y="424" font-family='"Liberation Sans", sans-serif' font-size="11" fill="#f4f2ee" stroke="#f4f2ee" stroke-width="0.15">/Вт</text>
<text x="233.0" y="424" font-family='"Liberation Sans", sans-serif' font-size="11" fill="#f4f2ee" stroke="#f4f2ee" stroke-width="0.15" text-anchor="end">26</text><text x="232.8" y="424" font-family='"Liberation Sans", sans-serif' font-size="11" fill="#f4f2ee" stroke="#f4f2ee" stroke-width="0.15">/Чт</text>
<text x="253.79999999999998" y="424" font-family='"Liberation Sans", sans-serif' font-size="11" fill="#f4f2ee" stroke="#f4f2ee" stroke-width="0.15" text-anchor="end">27</text><text x="253.6" y="424" font-family='"Liberation Sans", sans-serif' font-size="11" fill="#f4f2ee" stroke="#f4f2ee" stroke-width="0.15">/Пт</text>
<text x="296.8" y="424" font-family='"Liberation Sans", sans-serif' font-size="11" fill="#f4f2ee" stroke="#f4f2ee" stroke-width="0.15" text-anchor="end">30</text><text x="296.6" y="424" font-family='"Liberation Sans", sans-serif' font-size="11" fill="#f4f2ee" stroke="#f4f2ee" stroke-width="0.15">/Пн</text>
<text x="339.8" y="424" font-family='"Liberation Sans", sans-serif' font-size="11" fill="#f4f2ee" stroke="#f4f2ee" stroke-width="0.15" text-anchor="end">31</text><text x="339.6" y="424" font-family='"Liberation Sans", sans-serif' font-size="11" fill="#f4f2ee" stroke="#f4f2ee" stroke-width="0.15">/Вт</text>
<text x="368.7" y="424" font-family='"Liberation Sans", sans-serif' font-size="11" fill="#f4f2ee" stroke="#f4f2ee" stroke-width="0.15" text-anchor="end">2</text><text x="368.5" y="424" font-family='"Liberation Sans", sans-serif' font-size="11" fill="#f4f2ee" stroke="#f4f2ee" stroke-width="0.15">/Чт</text>
<text x="397.59999999999997" y="424" font-family='"Liberation Sans", sans-serif' font-size="11" fill="#f4f2ee" stroke="#f4f2ee" stroke-width="0.15" text-anchor="end">3</text><text x="397.4" y="424" font-family='"Liberation Sans", sans-serif' font-size="11" fill="#f4f2ee" stroke="#f4f2ee" stroke-width="0.15">/Пт</text>
<text x="440.59999999999997" y="424" font-family='"Liberation Sans", sans-serif' font-size="11" fill="#f4f2ee" stroke="#f4f2ee" stroke-width="0.15" text-anchor="end">6</text><text x="440.4" y="424" font-family='"Liberation Sans", sans-serif' font-size="11" fill="#f4f2ee" stroke="#f4f2ee" stroke-width="0.15">/Пн</text>
<text x="483.59999999999997" y="424" font-family='"Liberation Sans", sans-serif' font-size="11" fill="#f4f2ee" stroke="#f4f2ee" stroke-width="0.15" text-anchor="end">7</text><text x="483.4" y="424" font-family='"Liberation Sans", sans-serif' font-size="11" fill="#f4f2ee" stroke="#f4f2ee" stroke-width="0.15">/Вт</text>
<text x="526.6" y="424" font-family='"Liberation Sans", sans-serif' font-size="11" fill="#f4f2ee" stroke="#f4f2ee" stroke-width="0.15" text-anchor="end">8</text><text x="526.4" y="424" font-family='"Liberation Sans", sans-serif' font-size="11" fill="#f4f2ee" stroke="#f4f2ee" stroke-width="0.15">/Ср</text>
<text x="569.5" y="424" font-family='"Liberation Sans", sans-serif' font-size="11" fill="#f4f2ee" stroke="#f4f2ee" stroke-width="0.15" text-anchor="end">9</text><text x="569.3" y="424" font-family='"Liberation Sans", sans-serif' font-size="11" fill="#f4f2ee" stroke="#f4f2ee" stroke-width="0.15">/Чт</text>
<text x="612.5" y="424" font-family='"Liberation Sans", sans-serif' font-size="11" fill="#f4f2ee" stroke="#f4f2ee" stroke-width="0.15" text-anchor="end">10</text><text x="612.3" y="424" font-family='"Liberation Sans", sans-serif' font-size="11" fill="#f4f2ee" stroke="#f4f2ee" stroke-width="0.15">/Пт</text>
<text x="655.5" y="424" font-family='"Liberation Sans", sans-serif' font-size="11" fill="#f4f2ee" stroke="#f4f2ee" stroke-width="0.15" text-anchor="end">13</text><text x="655.3" y="424" font-family='"Liberation Sans", sans-serif' font-size="11" fill="#f4f2ee" stroke="#f4f2ee" stroke-width="0.15">/Пн</text>
<text x="698.6" y="424" font-family='"Liberation Sans", sans-serif' font-size="11" fill="#f4f2ee" stroke="#f4f2ee" stroke-width="0.15" text-anchor="end">14</text><text x="698.4" y="424" font-family='"Liberation Sans", sans-serif' font-size="11" fill="#f4f2ee" stroke="#f4f2ee" stroke-width="0.15">/Вт</text>
<text x="741.7" y="424" font-family='"Liberation Sans", sans-serif' font-size="11" fill="#f4f2ee" stroke="#f4f2ee" stroke-width="0.15" text-anchor="end">15</text><text x="741.5" y="424" font-family='"Liberation Sans", sans-serif' font-size="11" fill="#f4f2ee" stroke="#f4f2ee" stroke-width="0.15">/Ср</text>
<text x="784.6" y="424" font-family='"Liberation Sans", sans-serif' font-size="11" fill="#f4f2ee" stroke="#f4f2ee" stroke-width="0.15" text-anchor="end">16</text><text x="784.4" y="424" font-family='"Liberation Sans", sans-serif' font-size="11" fill="#f4f2ee" stroke="#f4f2ee" stroke-width="0.15">/Чт</text>
<text x="827.5" y="424" font-family='"Liberation Sans", sans-serif' font-size="11" fill="#f4f2ee" stroke="#f4f2ee" stroke-width="0.15" text-anchor="end">17</text><text x="827.3" y="424" font-family='"Liberation Sans", sans-serif' font-size="11" fill="#f4f2ee" stroke="#f4f2ee" stroke-width="0.15">/Пт</text>
<text x="870.7" y="424" font-family='"Liberation Sans", sans-serif' font-size="11" fill="#f4f2ee" stroke="#f4f2ee" stroke-width="0.15" text-anchor="end">20</text><text x="870.5" y="424" font-family='"Liberation Sans", sans-serif' font-size="11" fill="#f4f2ee" stroke="#f4f2ee" stroke-width="0.15">/Пн</text>
<rect x="17.5" y="378.5" width="59" height="19" rx="2" fill="#5d6c80" stroke="#a9b9c8" stroke-width="1"/>
<text x="24.2" y="391.8" font-family='"Liberation Sans", sans-serif' font-size="11" fill="#f4f2ee" stroke="#f4f2ee" stroke-width="0.15" textLength="46" lengthAdjust="spacingAndGlyphs">Дек 2019</text>
<line x1="17.5" y1="378" x2="17.5" y2="405" stroke="#c8e8e0" stroke-width="2"/>
<rect x="369.5" y="378.5" width="60" height="19" rx="2" fill="#5d6c80" stroke="#a9b9c8" stroke-width="1"/>
<text x="376.4" y="391.8" font-family='"Liberation Sans", sans-serif' font-size="11" fill="#f4f2ee" stroke="#f4f2ee" stroke-width="0.15" textLength="45.8" lengthAdjust="spacingAndGlyphs">Янв 2020</text>
<line x1="369" y1="378" x2="369" y2="405" stroke="#c8e8e0" stroke-width="2"/>
</svg>
</body></html>
